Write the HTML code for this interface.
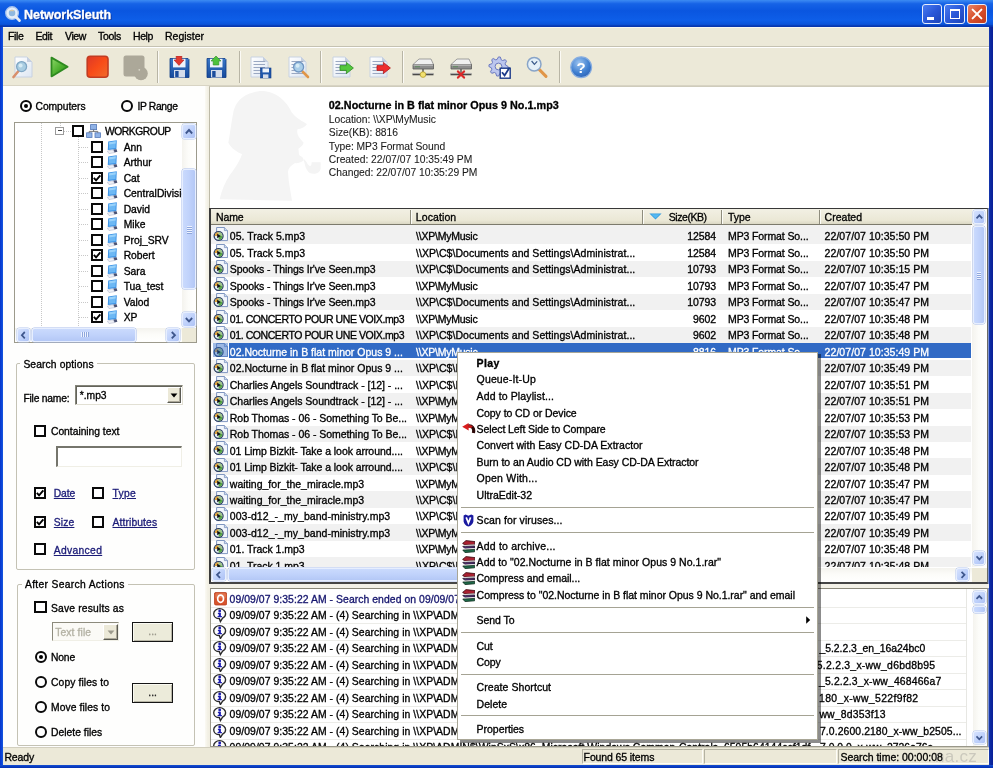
<!DOCTYPE html>
<html><head><meta charset="utf-8"><title>NetworkSleuth</title>
<style>
html,body{margin:0;padding:0;background:#0a3cc8;}
body{width:993px;height:768px;overflow:hidden;font-family:"Liberation Sans",sans-serif;}
#w{opacity:.999;filter:blur(.4px);position:relative;width:993px;height:768px;overflow:hidden;background:#ece9d8;}
#w div,#w span.t,#w svg{position:absolute;box-sizing:border-box;}
span.t{white-space:pre;line-height:1.117;-webkit-text-stroke:.32px currentColor;}

</style></head>
<body>
<div id="w">
<div style="left:0px;top:0px;width:993px;height:27px;background:linear-gradient(180deg,#3c8cf2 0%,#2d7aee 6%,#1663e6 14%,#0a56e0 40%,#0e5ee8 75%,#0b54da 90%,#0838b0 96%,#0836ac 100%);"></div>
<div style="left:0px;top:27px;width:3.2px;height:741px;background:linear-gradient(90deg,#0a34c8,#0a48dc 60%,#1a56dc);"></div>
<div style="left:988.3px;top:27px;width:4.7px;height:741px;background:linear-gradient(90deg,#dfe8fa 0,#1a3cb0 20%,#0c2aa2 45%,#0a1e96 100%);"></div>
<div style="left:0px;top:764.5px;width:993px;height:3.5px;background:linear-gradient(180deg,#1a52d0,#0a40c8 40%,#0530b0);"></div>
<svg style="left:4px;top:4.5px" width="18.5" height="18.5" viewBox="0 0 17 17"><circle cx="7.4" cy="7.4" r="5.8" fill="#e4eefa" stroke="#a8c4ee" stroke-width="1.2"/><circle cx="7.4" cy="7.4" r="3" fill="#8fb8e0"/><path d="M5.6 5.4 A3 3 0 0 1 9 5.6" stroke="#d8c8a8" stroke-width="1.2" fill="none"/><path d="M10.8 10.8 L14.2 14.2" stroke="#e6eaf2" stroke-width="2.6" stroke-linecap="round"/></svg>
<span class="t" style="top:7.83px;font-size:12.6px;left:24px;letter-spacing:-0.090px;color:#fff;font-weight:bold;text-shadow:1px 1px 0 #0a2c8c;">NetworkSleuth</span>
<div style="left:922.2px;top:4px;width:20.3px;height:20px;border:1px solid #e8eefc;border-radius:3px;background:linear-gradient(135deg,#4a7cf0,#2a58d8 50%,#1c44b8);"><div style="left:4px;top:12px;width:7px;height:2.6px;background:#fff"></div></div>
<div style="left:944.4px;top:4px;width:20.3px;height:20px;border:1px solid #e8eefc;border-radius:3px;background:linear-gradient(135deg,#4a7cf0,#2a58d8 50%,#1c44b8);"><div style="left:4.2px;top:4px;width:10.4px;height:10.4px;border:1.4px solid #fff;border-top-width:2.6px"></div></div>
<div style="left:966.8px;top:4px;width:20.3px;height:20px;border:1px solid #e8eefc;border-radius:3px;background:linear-gradient(135deg,#e8866a,#d8502c 50%,#c03a1c);"><svg style="left:0;top:0" width="18" height="18" viewBox="0 0 18 18"><path d="M4.6 4.6 L13.4 13.4 M13.4 4.6 L4.6 13.4" stroke="#fff" stroke-width="2" stroke-linecap="round"/></svg></div>
<div style="left:3px;top:27px;width:986px;height:19.5px;background:#ece9d8;border-top:1px solid #f8f7f0;"></div>
<span class="t" style="top:30.78px;font-size:10.5px;left:8px;letter-spacing:-0.380px;">File</span>
<span class="t" style="top:30.78px;font-size:10.5px;left:35.5px;letter-spacing:-0.398px;">Edit</span>
<span class="t" style="top:30.78px;font-size:10.5px;left:65px;letter-spacing:-0.395px;">View</span>
<span class="t" style="top:30.78px;font-size:10.5px;left:98px;letter-spacing:-0.303px;">Tools</span>
<span class="t" style="top:30.78px;font-size:10.5px;left:133px;letter-spacing:-0.402px;">Help</span>
<span class="t" style="top:30.78px;font-size:10.5px;left:165px;letter-spacing:-0.014px;">Register</span>
<div style="left:3px;top:46px;width:986px;height:1px;background:#c5c2b2;"></div>
<div style="left:3px;top:47px;width:986px;height:1px;background:#fff;"></div>
<div style="left:3px;top:48px;width:986px;height:38px;background:#ece9d8;"></div>
<div style="left:3px;top:85px;width:986px;height:1px;background:#d8d4c4;"></div>
<div style="left:156.5px;top:51px;width:1px;height:32px;background:#b8b5a5;"></div>
<div style="left:157.5px;top:51px;width:1px;height:32px;background:#fbfaf5;"></div>
<div style="left:238.5px;top:51px;width:1px;height:32px;background:#b8b5a5;"></div>
<div style="left:239.5px;top:51px;width:1px;height:32px;background:#fbfaf5;"></div>
<div style="left:320px;top:51px;width:1px;height:32px;background:#b8b5a5;"></div>
<div style="left:321px;top:51px;width:1px;height:32px;background:#fbfaf5;"></div>
<div style="left:401.5px;top:51px;width:1px;height:32px;background:#b8b5a5;"></div>
<div style="left:402.5px;top:51px;width:1px;height:32px;background:#fbfaf5;"></div>
<div style="left:559px;top:51px;width:1px;height:32px;background:#b8b5a5;"></div>
<div style="left:560px;top:51px;width:1px;height:32px;background:#fbfaf5;"></div>
<svg width="0" height="0" style="left:0;top:0"><defs><linearGradient id="gPlay" x1="0" y1="0" x2="1" y2="1"><stop offset="0" stop-color="#8fd86a"/><stop offset=".55" stop-color="#4aae2c"/><stop offset="1" stop-color="#2f8a1c"/></linearGradient><linearGradient id="gStop" x1="0" y1="0" x2="1" y2="1"><stop offset="0" stop-color="#dc3828"/><stop offset=".5" stop-color="#f84c18"/><stop offset="1" stop-color="#f06c2c"/></linearGradient><linearGradient id="gFlop" x1="0" y1="0" x2="0" y2="1"><stop offset="0" stop-color="#3a78c8"/><stop offset="1" stop-color="#164a9c"/></linearGradient><linearGradient id="gPage" x1="0" y1="0" x2="1" y2="1"><stop offset="0" stop-color="#ffffff"/><stop offset="1" stop-color="#dde6f2"/></linearGradient><radialGradient id="gHelp" cx=".4" cy=".3" r=".8"><stop offset="0" stop-color="#9cc4f0"/><stop offset=".6" stop-color="#3f7fd0"/><stop offset="1" stop-color="#2a5cb0"/></radialGradient><linearGradient id="gDrv" x1="0" y1="0" x2="0" y2="1"><stop offset="0" stop-color="#f4f4f4"/><stop offset="1" stop-color="#a8a8a8"/></linearGradient></defs></svg>
<svg style="left:11.5px;top:55.5px" width="21" height="23" viewBox="0 0 21 23"><g transform="translate(2,0)"><path d="M1 1 H13 L18 6 V21 H1 Z" fill="url(#gPage)" stroke="#c8d2e2" stroke-width="1"/><path d="M13 1 V6 H18 Z" fill="#c5cfdf"/></g><path d="M6.5 15 L1.5 21" stroke="#d8906c" stroke-width="2.6" stroke-linecap="round"/><circle cx="9.6" cy="10.6" r="5" fill="#a9cde2" stroke="#7fa6c4" stroke-width="1.3"/><circle cx="8.6" cy="9.4" r="2" fill="#d6ebf5"/></svg>
<svg style="left:49px;top:55px" width="21" height="24" viewBox="0 0 21 24"><path d="M2.5 2.6 L18.6 11.8 L2.5 21.4 Z" fill="url(#gPlay)" stroke="#2e8a20" stroke-width="1.8" stroke-linejoin="round"/></svg>
<svg style="left:85.5px;top:55px" width="23.5" height="24" viewBox="0 0 23.5 24"><rect x="1.2" y="1.2" width="20.8" height="21" rx="3" fill="url(#gStop)" stroke="#c23c22" stroke-width="1.6"/></svg>
<svg style="left:122.5px;top:54.5px" width="26" height="26" viewBox="0 0 26 26"><rect x="0.5" y="0.5" width="21" height="21" rx="2.5" fill="#aca899"/><circle cx="18" cy="18.5" r="6.8" fill="#aca899"/><circle cx="16.3" cy="14.8" r="0.9" fill="#d8d5c8"/></svg>
<svg style="left:168.5px;top:55.5px" width="21" height="23" viewBox="0 0 21 23"><path d="M1 2.5 H19 L20 3.5 V21.5 H1 Z" fill="url(#gFlop)" stroke="#0e3a86" stroke-width=".8"/><rect x="4" y="2.8" width="12.5" height="8.6" fill="#eef3fa"/><rect x="5" y="14" width="11" height="7.5" fill="#d4dcea"/><rect x="6.2" y="15" width="3.4" height="6" fill="#1b4c9c"/><path d="M7.2 0 H12.8 V4 H15 L10 9.4 L5 4 H7.2 Z" fill="#e03a30" stroke="#b02020" stroke-width=".6"/></svg>
<svg style="left:205.8px;top:55.5px" width="21" height="23" viewBox="0 0 21 23"><path d="M1 2.5 H19 L20 3.5 V21.5 H1 Z" fill="url(#gFlop)" stroke="#0e3a86" stroke-width=".8"/><rect x="4" y="2.8" width="12.5" height="8.6" fill="#eef3fa"/><rect x="5" y="14" width="11" height="7.5" fill="#d4dcea"/><rect x="6.2" y="15" width="3.4" height="6" fill="#1b4c9c"/><path d="M10 0 L15 5 H12.8 V9 H7.2 V5 H5 Z" fill="#4ec23c" stroke="#2e8a22" stroke-width=".6"/></svg>
<svg style="left:250px;top:55.5px" width="23" height="23" viewBox="0 0 23 23"><path d="M1 1 H13 L18 6 V21 H1 Z" fill="url(#gPage)" stroke="#c8d2e2" stroke-width="1"/><path d="M13 1 V6 H18 Z" fill="#c5cfdf"/><path d="M3.5 5.5 H15" stroke="#9aa8c2" stroke-width="1"/><path d="M3.5 8.5 H15" stroke="#9aa8c2" stroke-width="1"/><path d="M3.5 11.5 H15" stroke="#9aa8c2" stroke-width="1"/><path d="M3.5 14.5 H15" stroke="#9aa8c2" stroke-width="1"/><path d="M3.5 17.5 H15" stroke="#9aa8c2" stroke-width="1"/><rect x="10.5" y="12" width="10.5" height="10" fill="#1f56aa" stroke="#0e3a86" stroke-width=".6"/><rect x="12.5" y="12.4" width="6.5" height="4" fill="#eef3fa"/><rect x="13" y="18.4" width="5.4" height="3.6" fill="#d4dcea"/></svg>
<svg style="left:288px;top:55.5px" width="23" height="23" viewBox="0 0 23 23"><path d="M1 1 H13 L18 6 V21 H1 Z" fill="url(#gPage)" stroke="#c8d2e2" stroke-width="1"/><path d="M13 1 V6 H18 Z" fill="#c5cfdf"/><path d="M3.5 5.5 H15" stroke="#9aa8c2" stroke-width="1"/><path d="M3.5 8.5 H15" stroke="#9aa8c2" stroke-width="1"/><path d="M3.5 11.5 H15" stroke="#9aa8c2" stroke-width="1"/><path d="M3.5 14.5 H15" stroke="#9aa8c2" stroke-width="1"/><path d="M3.5 17.5 H15" stroke="#9aa8c2" stroke-width="1"/><path d="M14.5 15.5 L20 21" stroke="#e09648" stroke-width="2.6" stroke-linecap="round"/><circle cx="10.6" cy="11" r="5" fill="#a9cde8" stroke="#7096c2" stroke-width="1.3"/><circle cx="9.6" cy="9.8" r="2" fill="#d6ebf5"/></svg>
<svg style="left:332px;top:55.5px" width="23" height="23" viewBox="0 0 23 23"><path d="M1 1 H13 L18 6 V21 H1 Z" fill="url(#gPage)" stroke="#c8d2e2" stroke-width="1"/><path d="M13 1 V6 H18 Z" fill="#c5cfdf"/><path d="M3.5 5.5 H15" stroke="#9aa8c2" stroke-width="1"/><path d="M3.5 8.5 H15" stroke="#9aa8c2" stroke-width="1"/><path d="M3.5 11.5 H15" stroke="#9aa8c2" stroke-width="1"/><path d="M3.5 14.5 H15" stroke="#9aa8c2" stroke-width="1"/><path d="M3.5 17.5 H15" stroke="#9aa8c2" stroke-width="1"/><path d="M8 9.6 H14.4 V6.4 L21.4 12 L14.4 17.6 V14.4 H8 Z" fill="#54c83e" stroke="#2f8a22" stroke-width=".8"/></svg>
<svg style="left:369px;top:55.5px" width="23" height="23" viewBox="0 0 23 23"><path d="M1 1 H13 L18 6 V21 H1 Z" fill="url(#gPage)" stroke="#c8d2e2" stroke-width="1"/><path d="M13 1 V6 H18 Z" fill="#c5cfdf"/><path d="M3.5 5.5 H15" stroke="#9aa8c2" stroke-width="1"/><path d="M3.5 8.5 H15" stroke="#9aa8c2" stroke-width="1"/><path d="M3.5 11.5 H15" stroke="#9aa8c2" stroke-width="1"/><path d="M3.5 14.5 H15" stroke="#9aa8c2" stroke-width="1"/><path d="M3.5 17.5 H15" stroke="#9aa8c2" stroke-width="1"/><path d="M8 9.6 H14.4 V6.4 L21.4 12 L14.4 17.6 V14.4 H8 Z" fill="#ee2e2e" stroke="#b01818" stroke-width=".8"/></svg>
<svg style="left:411px;top:56px" width="24" height="23" viewBox="0 0 24 23"><path d="M2 8.5 L8 3 H20 L22.5 8.5 Z" fill="#f0f0f0" stroke="#8a8a8a" stroke-width=".8"/><path d="M2 8.5 H22.5 V13 H2 Z" fill="#8c8c8c" stroke="#5a5a5a" stroke-width=".8"/><path d="M2.4 9 H22" stroke="#e8e8e8" stroke-width=".8"/><rect x="4" y="10" width="5" height="1.4" fill="#6a8a6a"/><path d="M12 13 V17" stroke="#555" stroke-width="1.4"/><path d="M1.5 18.3 H22.5" stroke="#4a4a4a" stroke-width="2"/><path d="M1.5 17.3 H22.5" stroke="#c8c8c8" stroke-width=".8"/><circle cx="12" cy="18.6" r="2.8" fill="#f2e070" stroke="#b09820" stroke-width=".7"/></svg>
<svg style="left:448.5px;top:56px" width="24" height="23" viewBox="0 0 24 23"><path d="M2 8.5 L8 3 H20 L22.5 8.5 Z" fill="#f0f0f0" stroke="#8a8a8a" stroke-width=".8"/><path d="M2 8.5 H22.5 V13 H2 Z" fill="#8c8c8c" stroke="#5a5a5a" stroke-width=".8"/><path d="M2.4 9 H22" stroke="#e8e8e8" stroke-width=".8"/><rect x="4" y="10" width="5" height="1.4" fill="#6a8a6a"/><path d="M12 13 V17" stroke="#555" stroke-width="1.4"/><path d="M1.5 18.3 H22.5" stroke="#4a4a4a" stroke-width="2"/><path d="M1.5 17.3 H22.5" stroke="#c8c8c8" stroke-width=".8"/><path d="M9 15.4 L15 21.6 M15 15.4 L9 21.6" stroke="#dc2828" stroke-width="2.2" stroke-linecap="round"/></svg>
<svg style="left:487.5px;top:55.5px" width="25" height="24" viewBox="0 0 25 24"><path d="M20.10 10.50 L19.92 12.37 L17.15 13.26 L16.49 14.50 L17.29 17.29 L15.83 18.48 L13.26 17.15 L11.90 17.56 L10.50 20.10 L8.63 19.92 L7.74 17.15 L6.50 16.49 L3.71 17.29 L2.52 15.83 L3.85 13.26 L3.44 11.90 L0.90 10.50 L1.08 8.63 L3.85 7.74 L4.51 6.50 L3.71 3.71 L5.17 2.52 L7.74 3.85 L9.10 3.44 L10.50 0.90 L12.37 1.08 L13.26 3.85 L14.50 4.51 L17.29 3.71 L18.48 5.17 L17.15 7.74 L17.56 9.10 Z" fill="#bcc6ee" stroke="#6a78c0" stroke-width="1"/><circle cx="10.5" cy="10.5" r="3.4" fill="#ece9d8" stroke="#6a78c0" stroke-width="1"/><rect x="12.2" y="12.2" width="10" height="10" fill="#fff" stroke="#1c3a8a" stroke-width="1.4"/><path d="M14 16.2 L16.6 19.4 L21.6 11.6" fill="none" stroke="#1c3a8a" stroke-width="1.8"/></svg>
<svg style="left:526px;top:55.5px" width="23" height="23" viewBox="0 0 23 23"><path d="M12.4 12.6 L20 20.4" stroke="#e09648" stroke-width="3" stroke-linecap="round"/><circle cx="8.2" cy="8.2" r="6.8" fill="#e4f0f8" stroke="#88a4c8" stroke-width="1.5"/><path d="M5.6 5 L8.4 8.4 L11.2 5.4" fill="none" stroke="#3a5a8a" stroke-width="1.2"/></svg>
<svg style="left:569.5px;top:55.5px" width="23" height="23" viewBox="0 0 23 23"><circle cx="11.2" cy="11.2" r="10.4" fill="url(#gHelp)" stroke="#88aee0" stroke-width="1.2"/><text x="11.2" y="16.6" font-family="Liberation Sans" font-weight="bold" font-size="15" text-anchor="middle" fill="#fff">?</text></svg>
<div style="left:3px;top:86px;width:202px;height:661px;background:#fefefd;"></div>
<div style="left:205px;top:86px;width:4.5px;height:661px;background:linear-gradient(90deg,#fbfaf4,#f3f1e6 50%,#f0ede0);"></div>
<div style="left:19.8px;top:100px;width:11.8px;height:11.8px;border:2px solid #0a0a0a;border-radius:50%;background:#fff;"><div style="left:1.9px;top:1.9px;width:4px;height:4px;border-radius:50%;background:#000"></div></div>
<span class="t" style="top:100.89px;font-size:10.3px;left:35.5px;letter-spacing:-0.040px;">Computers</span>
<div style="left:121.3px;top:100px;width:11.8px;height:11.8px;border:2px solid #0a0a0a;border-radius:50%;background:#fff;"></div>
<span class="t" style="top:100.89px;font-size:10.3px;left:137.4px;letter-spacing:-0.319px;">IP Range</span>
<div style="left:13.7px;top:122px;width:183.3px;height:221px;border:1px solid #9c9a8c;background:#fff;"></div>
<div style="left:41px;top:123px;width:1px;height:204px;background-image:linear-gradient(#c8c8c8 50%,transparent 50%);background-size:1px 2px;"></div>
<div style="left:59.5px;top:123px;width:1px;height:4px;background-image:linear-gradient(#c8c8c8 50%,transparent 50%);background-size:1px 2px;"></div>
<div style="left:64px;top:130.5px;width:8px;height:1px;background-image:linear-gradient(90deg,#c8c8c8 50%,transparent 50%);background-size:2px 1px;"></div>
<div style="left:78px;top:137px;width:1px;height:190px;background-image:linear-gradient(#c8c8c8 50%,transparent 50%);background-size:1px 2px;"></div>
<div style="left:55.4px;top:126.6px;width:8.6px;height:8.6px;border:1px solid #9a9a9a;background:#fff;"><div style="left:1.3px;top:2.8px;width:4px;height:1px;background:#444"></div></div>
<div style="left:72.3px;top:124.5px;width:12.2px;height:12.2px;border:2px solid #0a0a0a;background:#fff;"></div>
<svg style="left:85.5px;top:123.5px" width="15" height="15" viewBox="0 0 15 15"><rect x="4.6" y="0.6" width="6" height="5" fill="#8fb2e6" stroke="#5478b8" stroke-width=".8"/><rect x="0.6" y="8.8" width="5.4" height="4.6" fill="#8fb2e6" stroke="#5478b8" stroke-width=".8"/><rect x="9" y="8.8" width="5.4" height="4.6" fill="#8fb2e6" stroke="#5478b8" stroke-width=".8"/><path d="M7.6 5.6 V7.6 M3.2 8.8 V7.4 H11.8 V8.8" fill="none" stroke="#6a6a6a" stroke-width=".9"/></svg>
<span class="t" style="top:125.99px;font-size:10.3px;left:105px;letter-spacing:-0.444px;">WORKGROUP</span>
<div style="left:79px;top:146.6px;width:10px;height:1px;background-image:linear-gradient(90deg,#c8c8c8 50%,transparent 50%);background-size:2px 1px;"></div>
<div style="left:90.6px;top:140.5px;width:12.2px;height:12.2px;border:2px solid #0a0a0a;background:#fff;"></div>
<svg style="left:106.2px;top:139.6px" width="13" height="14" viewBox="0 0 13 14"><path d="M2.2 1.4 L10.8 0.2 L10.4 9.2 L1.8 10 Z" fill="#3f94e6"/><path d="M3.2 2.2 L9.8 1.2 L9.5 8 L2.9 8.8 Z" fill="#6db8f4"/><path d="M3.2 2.2 L9.8 1.2 L9.7 3.4 L3.1 4.6 Z" fill="#9ad2fa"/><path d="M1.4 11.2 L6 9.8 L8 10.8 L8.4 12.6 L3 13.6 Z" fill="#eef0f6" stroke="#a8aec8" stroke-width=".5"/><path d="M7.4 9.6 L10.6 9.2 L11.4 11.8 L8.6 12.6 Z" fill="#4a5274"/></svg>
<span class="t" style="top:141.89px;font-size:10.3px;left:123.7px;">Ann</span>
<div style="left:79px;top:162.1px;width:10px;height:1px;background-image:linear-gradient(90deg,#c8c8c8 50%,transparent 50%);background-size:2px 1px;"></div>
<div style="left:90.6px;top:156px;width:12.2px;height:12.2px;border:2px solid #0a0a0a;background:#fff;"></div>
<svg style="left:106.2px;top:155.1px" width="13" height="14" viewBox="0 0 13 14"><path d="M2.2 1.4 L10.8 0.2 L10.4 9.2 L1.8 10 Z" fill="#3f94e6"/><path d="M3.2 2.2 L9.8 1.2 L9.5 8 L2.9 8.8 Z" fill="#6db8f4"/><path d="M3.2 2.2 L9.8 1.2 L9.7 3.4 L3.1 4.6 Z" fill="#9ad2fa"/><path d="M1.4 11.2 L6 9.8 L8 10.8 L8.4 12.6 L3 13.6 Z" fill="#eef0f6" stroke="#a8aec8" stroke-width=".5"/><path d="M7.4 9.6 L10.6 9.2 L11.4 11.8 L8.6 12.6 Z" fill="#4a5274"/></svg>
<span class="t" style="top:157.39px;font-size:10.3px;left:123.7px;">Arthur</span>
<div style="left:79px;top:177.6px;width:10px;height:1px;background-image:linear-gradient(90deg,#c8c8c8 50%,transparent 50%);background-size:2px 1px;"></div>
<div style="left:90.6px;top:171.5px;width:12.2px;height:12.2px;border:2px solid #0a0a0a;background:#fff;"><svg style="left:-2px;top:-2px" width="12.2" height="12.2" viewBox="0 0 12 12"><path d="M2.8 5.8 L5 8.2 L9.2 3.4" fill="none" stroke="#000" stroke-width="1.9"/></svg></div>
<svg style="left:106.2px;top:170.6px" width="13" height="14" viewBox="0 0 13 14"><path d="M2.2 1.4 L10.8 0.2 L10.4 9.2 L1.8 10 Z" fill="#3f94e6"/><path d="M3.2 2.2 L9.8 1.2 L9.5 8 L2.9 8.8 Z" fill="#6db8f4"/><path d="M3.2 2.2 L9.8 1.2 L9.7 3.4 L3.1 4.6 Z" fill="#9ad2fa"/><path d="M1.4 11.2 L6 9.8 L8 10.8 L8.4 12.6 L3 13.6 Z" fill="#eef0f6" stroke="#a8aec8" stroke-width=".5"/><path d="M7.4 9.6 L10.6 9.2 L11.4 11.8 L8.6 12.6 Z" fill="#4a5274"/></svg>
<span class="t" style="top:172.89px;font-size:10.3px;left:123.7px;">Cat</span>
<div style="left:79px;top:193.1px;width:10px;height:1px;background-image:linear-gradient(90deg,#c8c8c8 50%,transparent 50%);background-size:2px 1px;"></div>
<div style="left:90.6px;top:187px;width:12.2px;height:12.2px;border:2px solid #0a0a0a;background:#fff;"></div>
<svg style="left:106.2px;top:186.1px" width="13" height="14" viewBox="0 0 13 14"><path d="M2.2 1.4 L10.8 0.2 L10.4 9.2 L1.8 10 Z" fill="#3f94e6"/><path d="M3.2 2.2 L9.8 1.2 L9.5 8 L2.9 8.8 Z" fill="#6db8f4"/><path d="M3.2 2.2 L9.8 1.2 L9.7 3.4 L3.1 4.6 Z" fill="#9ad2fa"/><path d="M1.4 11.2 L6 9.8 L8 10.8 L8.4 12.6 L3 13.6 Z" fill="#eef0f6" stroke="#a8aec8" stroke-width=".5"/><path d="M7.4 9.6 L10.6 9.2 L11.4 11.8 L8.6 12.6 Z" fill="#4a5274"/></svg>
<div style="left:123.7px;top:186.1px;width:58px;height:14px;overflow:hidden;"><span class="t" style="left:0;top:1.6px;font-size:10.3px">CentralDivisio</span></div>
<div style="left:79px;top:208.6px;width:10px;height:1px;background-image:linear-gradient(90deg,#c8c8c8 50%,transparent 50%);background-size:2px 1px;"></div>
<div style="left:90.6px;top:202.5px;width:12.2px;height:12.2px;border:2px solid #0a0a0a;background:#fff;"></div>
<svg style="left:106.2px;top:201.6px" width="13" height="14" viewBox="0 0 13 14"><path d="M2.2 1.4 L10.8 0.2 L10.4 9.2 L1.8 10 Z" fill="#3f94e6"/><path d="M3.2 2.2 L9.8 1.2 L9.5 8 L2.9 8.8 Z" fill="#6db8f4"/><path d="M3.2 2.2 L9.8 1.2 L9.7 3.4 L3.1 4.6 Z" fill="#9ad2fa"/><path d="M1.4 11.2 L6 9.8 L8 10.8 L8.4 12.6 L3 13.6 Z" fill="#eef0f6" stroke="#a8aec8" stroke-width=".5"/><path d="M7.4 9.6 L10.6 9.2 L11.4 11.8 L8.6 12.6 Z" fill="#4a5274"/></svg>
<span class="t" style="top:203.89px;font-size:10.3px;left:123.7px;">David</span>
<div style="left:79px;top:224.1px;width:10px;height:1px;background-image:linear-gradient(90deg,#c8c8c8 50%,transparent 50%);background-size:2px 1px;"></div>
<div style="left:90.6px;top:218px;width:12.2px;height:12.2px;border:2px solid #0a0a0a;background:#fff;"></div>
<svg style="left:106.2px;top:217.1px" width="13" height="14" viewBox="0 0 13 14"><path d="M2.2 1.4 L10.8 0.2 L10.4 9.2 L1.8 10 Z" fill="#3f94e6"/><path d="M3.2 2.2 L9.8 1.2 L9.5 8 L2.9 8.8 Z" fill="#6db8f4"/><path d="M3.2 2.2 L9.8 1.2 L9.7 3.4 L3.1 4.6 Z" fill="#9ad2fa"/><path d="M1.4 11.2 L6 9.8 L8 10.8 L8.4 12.6 L3 13.6 Z" fill="#eef0f6" stroke="#a8aec8" stroke-width=".5"/><path d="M7.4 9.6 L10.6 9.2 L11.4 11.8 L8.6 12.6 Z" fill="#4a5274"/></svg>
<span class="t" style="top:219.39px;font-size:10.3px;left:123.7px;">Mike</span>
<div style="left:79px;top:239.6px;width:10px;height:1px;background-image:linear-gradient(90deg,#c8c8c8 50%,transparent 50%);background-size:2px 1px;"></div>
<div style="left:90.6px;top:233.5px;width:12.2px;height:12.2px;border:2px solid #0a0a0a;background:#fff;"></div>
<svg style="left:106.2px;top:232.6px" width="13" height="14" viewBox="0 0 13 14"><path d="M2.2 1.4 L10.8 0.2 L10.4 9.2 L1.8 10 Z" fill="#3f94e6"/><path d="M3.2 2.2 L9.8 1.2 L9.5 8 L2.9 8.8 Z" fill="#6db8f4"/><path d="M3.2 2.2 L9.8 1.2 L9.7 3.4 L3.1 4.6 Z" fill="#9ad2fa"/><path d="M1.4 11.2 L6 9.8 L8 10.8 L8.4 12.6 L3 13.6 Z" fill="#eef0f6" stroke="#a8aec8" stroke-width=".5"/><path d="M7.4 9.6 L10.6 9.2 L11.4 11.8 L8.6 12.6 Z" fill="#4a5274"/></svg>
<span class="t" style="top:234.89px;font-size:10.3px;left:123.7px;">Proj_SRV</span>
<div style="left:79px;top:255.1px;width:10px;height:1px;background-image:linear-gradient(90deg,#c8c8c8 50%,transparent 50%);background-size:2px 1px;"></div>
<div style="left:90.6px;top:249px;width:12.2px;height:12.2px;border:2px solid #0a0a0a;background:#fff;"><svg style="left:-2px;top:-2px" width="12.2" height="12.2" viewBox="0 0 12 12"><path d="M2.8 5.8 L5 8.2 L9.2 3.4" fill="none" stroke="#000" stroke-width="1.9"/></svg></div>
<svg style="left:106.2px;top:248.1px" width="13" height="14" viewBox="0 0 13 14"><path d="M2.2 1.4 L10.8 0.2 L10.4 9.2 L1.8 10 Z" fill="#3f94e6"/><path d="M3.2 2.2 L9.8 1.2 L9.5 8 L2.9 8.8 Z" fill="#6db8f4"/><path d="M3.2 2.2 L9.8 1.2 L9.7 3.4 L3.1 4.6 Z" fill="#9ad2fa"/><path d="M1.4 11.2 L6 9.8 L8 10.8 L8.4 12.6 L3 13.6 Z" fill="#eef0f6" stroke="#a8aec8" stroke-width=".5"/><path d="M7.4 9.6 L10.6 9.2 L11.4 11.8 L8.6 12.6 Z" fill="#4a5274"/></svg>
<span class="t" style="top:250.39px;font-size:10.3px;left:123.7px;">Robert</span>
<div style="left:79px;top:270.6px;width:10px;height:1px;background-image:linear-gradient(90deg,#c8c8c8 50%,transparent 50%);background-size:2px 1px;"></div>
<div style="left:90.6px;top:264.5px;width:12.2px;height:12.2px;border:2px solid #0a0a0a;background:#fff;"></div>
<svg style="left:106.2px;top:263.6px" width="13" height="14" viewBox="0 0 13 14"><path d="M2.2 1.4 L10.8 0.2 L10.4 9.2 L1.8 10 Z" fill="#3f94e6"/><path d="M3.2 2.2 L9.8 1.2 L9.5 8 L2.9 8.8 Z" fill="#6db8f4"/><path d="M3.2 2.2 L9.8 1.2 L9.7 3.4 L3.1 4.6 Z" fill="#9ad2fa"/><path d="M1.4 11.2 L6 9.8 L8 10.8 L8.4 12.6 L3 13.6 Z" fill="#eef0f6" stroke="#a8aec8" stroke-width=".5"/><path d="M7.4 9.6 L10.6 9.2 L11.4 11.8 L8.6 12.6 Z" fill="#4a5274"/></svg>
<span class="t" style="top:265.89px;font-size:10.3px;left:123.7px;">Sara</span>
<div style="left:79px;top:286.1px;width:10px;height:1px;background-image:linear-gradient(90deg,#c8c8c8 50%,transparent 50%);background-size:2px 1px;"></div>
<div style="left:90.6px;top:280px;width:12.2px;height:12.2px;border:2px solid #0a0a0a;background:#fff;"></div>
<svg style="left:106.2px;top:279.1px" width="13" height="14" viewBox="0 0 13 14"><path d="M2.2 1.4 L10.8 0.2 L10.4 9.2 L1.8 10 Z" fill="#3f94e6"/><path d="M3.2 2.2 L9.8 1.2 L9.5 8 L2.9 8.8 Z" fill="#6db8f4"/><path d="M3.2 2.2 L9.8 1.2 L9.7 3.4 L3.1 4.6 Z" fill="#9ad2fa"/><path d="M1.4 11.2 L6 9.8 L8 10.8 L8.4 12.6 L3 13.6 Z" fill="#eef0f6" stroke="#a8aec8" stroke-width=".5"/><path d="M7.4 9.6 L10.6 9.2 L11.4 11.8 L8.6 12.6 Z" fill="#4a5274"/></svg>
<span class="t" style="top:281.39px;font-size:10.3px;left:123.7px;">Tua_test</span>
<div style="left:79px;top:301.6px;width:10px;height:1px;background-image:linear-gradient(90deg,#c8c8c8 50%,transparent 50%);background-size:2px 1px;"></div>
<div style="left:90.6px;top:295.5px;width:12.2px;height:12.2px;border:2px solid #0a0a0a;background:#fff;"></div>
<svg style="left:106.2px;top:294.6px" width="13" height="14" viewBox="0 0 13 14"><path d="M2.2 1.4 L10.8 0.2 L10.4 9.2 L1.8 10 Z" fill="#3f94e6"/><path d="M3.2 2.2 L9.8 1.2 L9.5 8 L2.9 8.8 Z" fill="#6db8f4"/><path d="M3.2 2.2 L9.8 1.2 L9.7 3.4 L3.1 4.6 Z" fill="#9ad2fa"/><path d="M1.4 11.2 L6 9.8 L8 10.8 L8.4 12.6 L3 13.6 Z" fill="#eef0f6" stroke="#a8aec8" stroke-width=".5"/><path d="M7.4 9.6 L10.6 9.2 L11.4 11.8 L8.6 12.6 Z" fill="#4a5274"/></svg>
<span class="t" style="top:296.89px;font-size:10.3px;left:123.7px;">Valod</span>
<div style="left:79px;top:317.1px;width:10px;height:1px;background-image:linear-gradient(90deg,#c8c8c8 50%,transparent 50%);background-size:2px 1px;"></div>
<div style="left:90.6px;top:311px;width:12.2px;height:12.2px;border:2px solid #0a0a0a;background:#fff;"><svg style="left:-2px;top:-2px" width="12.2" height="12.2" viewBox="0 0 12 12"><path d="M2.8 5.8 L5 8.2 L9.2 3.4" fill="none" stroke="#000" stroke-width="1.9"/></svg></div>
<svg style="left:106.2px;top:310.1px" width="13" height="14" viewBox="0 0 13 14"><path d="M2.2 1.4 L10.8 0.2 L10.4 9.2 L1.8 10 Z" fill="#3f94e6"/><path d="M3.2 2.2 L9.8 1.2 L9.5 8 L2.9 8.8 Z" fill="#6db8f4"/><path d="M3.2 2.2 L9.8 1.2 L9.7 3.4 L3.1 4.6 Z" fill="#9ad2fa"/><path d="M1.4 11.2 L6 9.8 L8 10.8 L8.4 12.6 L3 13.6 Z" fill="#eef0f6" stroke="#a8aec8" stroke-width=".5"/><path d="M7.4 9.6 L10.6 9.2 L11.4 11.8 L8.6 12.6 Z" fill="#4a5274"/></svg>
<span class="t" style="top:312.39px;font-size:10.3px;left:123.7px;">XP</span>
<div style="left:182px;top:123px;width:14px;height:204px;background:linear-gradient(90deg,#f4f3ee,#fcfcf9 45%,#fffffe);"></div>
<div style="left:182px;top:123.6px;width:14px;height:15.4px;background:linear-gradient(135deg,#d6e2fe,#bccffa 60%,#aec2f4);border:1px solid #e6eeff;border-radius:2.5px;box-shadow:0 0 0 .5px #b4c6ee;"><svg style="left:0;top:0" width="12" height="13.4" viewBox="0 0 13.6 13.6" preserveAspectRatio="none"><path d="M3.2 8.6 L6.8 5 L10.4 8.6" fill="none" stroke="#3e568c" stroke-width="2.1"/></svg></div>
<div style="left:182px;top:168.5px;width:14px;height:120px;background:linear-gradient(90deg,#cadafd,#c0d2fb 50%,#b4c8f6);border:1px solid #e6eeff;border-radius:2.5px;box-shadow:0 0 0 .5px #a8bcec;"><div style="left:3.5px;top:56px;width:5px;height:1px;background:#eef3ff;box-shadow:0 1px 0 #8ea6dc"></div><div style="left:3.5px;top:58px;width:5px;height:1px;background:#eef3ff;box-shadow:0 1px 0 #8ea6dc"></div><div style="left:3.5px;top:60px;width:5px;height:1px;background:#eef3ff;box-shadow:0 1px 0 #8ea6dc"></div><div style="left:3.5px;top:62px;width:5px;height:1px;background:#eef3ff;box-shadow:0 1px 0 #8ea6dc"></div></div>
<div style="left:182px;top:311.5px;width:14px;height:15px;background:linear-gradient(135deg,#d6e2fe,#bccffa 60%,#aec2f4);border:1px solid #e6eeff;border-radius:2.5px;box-shadow:0 0 0 .5px #b4c6ee;"><svg style="left:0;top:0" width="12" height="13" viewBox="0 0 13.6 13.6" preserveAspectRatio="none"><path d="M3.2 5.2 L6.8 8.8 L10.4 5.2" fill="none" stroke="#3e568c" stroke-width="2.1"/></svg></div>
<div style="left:14.7px;top:327.5px;width:167.3px;height:14.5px;background:linear-gradient(180deg,#f4f3ee,#fcfcf9 45%,#fffffe);"></div>
<div style="left:16.5px;top:327.8px;width:13px;height:14px;background:linear-gradient(135deg,#d6e2fe,#bccffa 60%,#aec2f4);border:1px solid #e6eeff;border-radius:2.5px;box-shadow:0 0 0 .5px #b4c6ee;"><svg style="left:0;top:0" width="11" height="12" viewBox="0 0 13.6 13.6" preserveAspectRatio="none"><path d="M8.4 3.4 L4.8 7 L8.4 10.6" fill="none" stroke="#3e568c" stroke-width="2.1"/></svg></div>
<div style="left:32px;top:327.8px;width:104px;height:14px;background:linear-gradient(180deg,#cadafd,#c0d2fb 50%,#b4c8f6);border:1px solid #e6eeff;border-radius:2.5px;box-shadow:0 0 0 .5px #a8bcec;"><div style="top:3.5px;left:48px;height:5px;width:1px;background:#eef3ff;box-shadow:1px 0 0 #8ea6dc"></div><div style="top:3.5px;left:50px;height:5px;width:1px;background:#eef3ff;box-shadow:1px 0 0 #8ea6dc"></div><div style="top:3.5px;left:52px;height:5px;width:1px;background:#eef3ff;box-shadow:1px 0 0 #8ea6dc"></div><div style="top:3.5px;left:54px;height:5px;width:1px;background:#eef3ff;box-shadow:1px 0 0 #8ea6dc"></div></div>
<div style="left:166px;top:327.8px;width:14px;height:14px;background:linear-gradient(135deg,#d6e2fe,#bccffa 60%,#aec2f4);border:1px solid #e6eeff;border-radius:2.5px;box-shadow:0 0 0 .5px #b4c6ee;"><svg style="left:0;top:0" width="12" height="12" viewBox="0 0 13.6 13.6" preserveAspectRatio="none"><path d="M5.4 3.4 L9 7 L5.4 10.6" fill="none" stroke="#3e568c" stroke-width="2.1"/></svg></div>
<div style="left:182px;top:327.5px;width:14px;height:14.5px;background:#ece9d8;"></div>
<div style="left:15.6px;top:363.4px;width:179px;height:206.4px;border:1px solid #c4c2b4;border-radius:2px;"></div>
<div style="left:20.4px;top:357.4px;width:76.3px;height:12px;background:#fefefd;"></div>
<span class="t" style="top:358.79px;font-size:10.3px;left:23.4px;letter-spacing:0.114px;">Search options</span>
<span class="t" style="top:393.39px;font-size:10.3px;left:23.4px;letter-spacing:-0.208px;">File name:</span>
<div style="left:75px;top:384.7px;width:107.8px;height:20px;border:1px solid #85857a;border-right-color:#e2e0d4;border-bottom-color:#e2e0d4;background:#fff;box-shadow:inset 1px 1px 0 #63635a;"></div>
<span class="t" style="top:389.79px;font-size:10.3px;left:79.7px;">*.mp3</span>
<div style="left:166.8px;top:387px;width:14.4px;height:15.6px;background:#ece9d8;border:1px solid #fff;border-right-color:#5a5a52;border-bottom-color:#5a5a52;box-shadow:inset -1px -1px 0 #aca899;"><svg style="left:2.7px;top:4.6px" width="8" height="5" viewBox="0 0 8 5"><path d="M0.6 0.6 H7.4 L4 4.4 Z" fill="#000"/></svg></div>
<div style="left:33.8px;top:424.5px;width:12.2px;height:12.2px;border:2px solid #0a0a0a;background:#fff;"></div>
<span class="t" style="top:425.79px;font-size:10.3px;left:51px;letter-spacing:-0.020px;">Containing text</span>
<div style="left:56.3px;top:446.3px;width:125.7px;height:20.7px;border:1px solid #f0efe6;border-top:2px solid #75756c;border-left:2px solid #75756c;background:#fff;"></div>
<div style="left:33.8px;top:486.9px;width:12.2px;height:12.2px;border:2px solid #0a0a0a;background:#fff;"><svg style="left:-2px;top:-2px" width="12.2" height="12.2" viewBox="0 0 12 12"><path d="M2.8 5.8 L5 8.2 L9.2 3.4" fill="none" stroke="#000" stroke-width="1.9"/></svg></div>
<span class="t" style="top:488.29px;font-size:10.3px;left:53.8px;letter-spacing:-0.141px;color:#1c1c78;text-decoration:underline;text-underline-offset:1px;">Date</span>
<div style="left:92.2px;top:486.9px;width:12.2px;height:12.2px;border:2px solid #0a0a0a;background:#fff;"></div>
<span class="t" style="top:488.29px;font-size:10.3px;left:112.5px;letter-spacing:0.293px;color:#1c1c78;text-decoration:underline;text-underline-offset:1px;">Type</span>
<div style="left:33.8px;top:516.1px;width:12.2px;height:12.2px;border:2px solid #0a0a0a;background:#fff;"><svg style="left:-2px;top:-2px" width="12.2" height="12.2" viewBox="0 0 12 12"><path d="M2.8 5.8 L5 8.2 L9.2 3.4" fill="none" stroke="#000" stroke-width="1.9"/></svg></div>
<span class="t" style="top:517.49px;font-size:10.3px;left:53.8px;letter-spacing:0.142px;color:#1c1c78;text-decoration:underline;text-underline-offset:1px;">Size</span>
<div style="left:92.2px;top:516.1px;width:12.2px;height:12.2px;border:2px solid #0a0a0a;background:#fff;"></div>
<span class="t" style="top:517.49px;font-size:10.3px;left:112.5px;letter-spacing:0.120px;color:#1c1c78;text-decoration:underline;text-underline-offset:1px;">Attributes</span>
<div style="left:33.8px;top:543.3px;width:12.2px;height:12.2px;border:2px solid #0a0a0a;background:#fff;"></div>
<span class="t" style="top:544.69px;font-size:10.3px;left:53.8px;letter-spacing:0.323px;color:#1c1c78;text-decoration:underline;text-underline-offset:1px;">Advanced</span>
<div style="left:16.8px;top:583.8px;width:177.8px;height:161.8px;border:1px solid #c4c2b4;border-radius:2px;"></div>
<div style="left:22px;top:577.8px;width:105.7px;height:12px;background:#fefefd;"></div>
<span class="t" style="top:579.19px;font-size:10.3px;left:25px;letter-spacing:0.320px;">After Search Actions</span>
<div style="left:34.4px;top:601.3px;width:12.2px;height:12.2px;border:2px solid #0a0a0a;background:#fff;"></div>
<span class="t" style="top:602.59px;font-size:10.3px;left:51px;letter-spacing:0.173px;">Save results as</span>
<div style="left:51.5px;top:622.3px;width:67.7px;height:19px;border:1px solid #f0efe6;border-top:1.5px solid #8c8a7c;border-left:1.5px solid #8c8a7c;background:#fbfaf6;"></div>
<span class="t" style="top:627.29px;font-size:10.3px;left:55.2px;letter-spacing:0.120px;color:#b4b2a4;">Text file</span>
<div style="left:102.6px;top:624.3px;width:15.2px;height:15.4px;background:#ece9d8;border:1px solid #fff;border-right-color:#5a5a52;border-bottom-color:#5a5a52;box-shadow:inset -1px -1px 0 #aca899;"><svg style="left:3.1px;top:4.5px" width="8" height="5" viewBox="0 0 8 5"><path d="M0.6 0.6 H7.4 L4 4.4 Z" fill="#9c9a8c"/></svg></div>
<div style="left:132.2px;top:621.8px;width:40.7px;height:20px;background:#ecebda;border:1px solid #151515;box-shadow:inset 1px 1px 0 #fafaf2,inset -1px -1px 0 #b8b6a6;"></div>
<span class="t" style="top:625.89px;font-size:10.3px;left:148.35px;color:#9c9a8c;">...</span>
<div style="left:35px;top:650.8px;width:11.8px;height:11.8px;border:2px solid #0a0a0a;border-radius:50%;background:#fff;"><div style="left:1.9px;top:1.9px;width:4px;height:4px;border-radius:50%;background:#000"></div></div>
<span class="t" style="top:651.89px;font-size:10.3px;left:51px;letter-spacing:-0.156px;">None</span>
<div style="left:35px;top:676.1px;width:11.8px;height:11.8px;border:2px solid #0a0a0a;border-radius:50%;background:#fff;"></div>
<span class="t" style="top:677.19px;font-size:10.3px;left:51px;letter-spacing:0.118px;">Copy files to</span>
<div style="left:132.2px;top:682.8px;width:40.7px;height:20px;background:#ecebda;border:1px solid #151515;box-shadow:inset 1px 1px 0 #fafaf2,inset -1px -1px 0 #b8b6a6;"></div>
<span class="t" style="top:686.89px;font-size:10.3px;left:148.35px;color:#222;">...</span>
<div style="left:35px;top:701.3px;width:11.8px;height:11.8px;border:2px solid #0a0a0a;border-radius:50%;background:#fff;"></div>
<span class="t" style="top:702.39px;font-size:10.3px;left:51px;letter-spacing:0.091px;">Move files to</span>
<div style="left:35px;top:726.1px;width:11.8px;height:11.8px;border:2px solid #0a0a0a;border-radius:50%;background:#fff;"></div>
<span class="t" style="top:727.19px;font-size:10.3px;left:51px;letter-spacing:0.022px;">Delete files</span>
<div style="left:3px;top:746.6px;width:986px;height:18px;background:#ece9d8;"></div>
<div style="left:3px;top:746.6px;width:986px;height:1px;background:#d2cfbf;"></div>
<span class="t" style="top:752.08px;font-size:10.5px;left:4.4px;letter-spacing:-0.152px;">Ready</span>
<div style="left:581.5px;top:748.6px;width:121px;height:15.6px;border:1px solid #fdfdf8;border-top-color:#b4b2a2;border-left-color:#b4b2a2;"></div>
<div style="left:704px;top:748.6px;width:133px;height:15.6px;border:1px solid #fdfdf8;border-top-color:#b4b2a2;border-left-color:#b4b2a2;"></div>
<div style="left:838.4px;top:748.6px;width:150.6px;height:15.6px;border:1px solid #fdfdf8;border-top-color:#b4b2a2;border-left-color:#b4b2a2;"></div>
<span class="t" style="top:752.08px;font-size:10.5px;left:583.6px;letter-spacing:-0.120px;">Found 65 items</span>
<span class="t" style="top:752.08px;font-size:10.5px;left:840.4px;letter-spacing:-0.016px;">Search time: 00:00:08</span>
<span class="t" style="top:747.24px;font-size:17px;left:935px;letter-spacing:0.272px;color:rgba(125,125,125,.3);-webkit-text-stroke:0;">na.cz</span>
<div style="left:209px;top:85.5px;width:780px;height:122px;background:#fff;border-left:1px solid #bdbaa8;border-top:1px solid #cfccbc;"></div>
<svg style="left:205px;top:84px" width="140" height="128" viewBox="0 0 840 768"><path d="M170 170 C185 110 220 60 330 42 C420 38 490 100 520 170 C545 205 585 225 612 240 C600 262 575 268 555 272 C548 300 560 320 592 352 C585 372 570 380 560 388 C565 405 560 415 566 428 L585 440 C600 470 598 500 615 520 C625 545 690 548 694 505 L694 470 L640 470 C640 500 625 500 610 470 L596 452 C585 470 560 478 540 474 C515 490 500 505 498 525 C500 590 515 650 522 700 L88 692 C100 640 120 590 150 545 C185 500 215 450 222 420 C190 405 160 390 140 352 C150 300 158 230 170 170 Z" fill="#f4f4f4"/></svg>
<span class="t" style="top:99.31px;font-size:10.8px;left:328.8px;letter-spacing:0.019px;font-weight:bold;-webkit-text-stroke:.3px #000;">02.Nocturne in B flat minor Opus 9 No.1.mp3</span>
<span class="t" style="top:114.09px;font-size:10.3px;left:328.8px;letter-spacing:-0.027px;color:#1a1a1a;-webkit-text-stroke:.08px #1a1a1a;">Location: \\XP\MyMusic</span>
<span class="t" style="top:127.44px;font-size:10.3px;left:328.8px;color:#1a1a1a;-webkit-text-stroke:.08px #1a1a1a;">Size(KB): 8816</span>
<span class="t" style="top:140.79px;font-size:10.3px;left:328.8px;letter-spacing:-0.047px;color:#1a1a1a;-webkit-text-stroke:.08px #1a1a1a;">Type: MP3 Format Sound</span>
<span class="t" style="top:154.14px;font-size:10.3px;left:328.8px;letter-spacing:-0.006px;color:#1a1a1a;-webkit-text-stroke:.08px #1a1a1a;">Created: 22/07/07 10:35:49 PM</span>
<span class="t" style="top:167.49px;font-size:10.3px;left:328.8px;letter-spacing:-0.009px;color:#1a1a1a;-webkit-text-stroke:.08px #1a1a1a;">Changed: 22/07/07 10:35:29 PM</span>
<div style="left:209px;top:208px;width:779px;height:376px;background:#fff;border:1px solid #383838;border-left:2px solid #3a3a3a;border-bottom:2px solid #454545;border-right:1px solid #6a6a64;"></div>
<div style="left:211px;top:224.5px;width:760px;height:19.87px;background:#f1f1f1;"></div>
<div style="left:211px;top:260.84px;width:760px;height:16.47px;background:#f1f1f1;"></div>
<div style="left:211px;top:293.78px;width:760px;height:16.47px;background:#f1f1f1;"></div>
<div style="left:211px;top:326.72px;width:760px;height:16.47px;background:#f1f1f1;"></div>
<div style="left:211px;top:359.66px;width:760px;height:16.47px;background:#f1f1f1;"></div>
<div style="left:211px;top:392.6px;width:760px;height:16.47px;background:#f1f1f1;"></div>
<div style="left:211px;top:425.54px;width:760px;height:16.47px;background:#f1f1f1;"></div>
<div style="left:211px;top:458.48px;width:760px;height:16.47px;background:#f1f1f1;"></div>
<div style="left:211px;top:491.42px;width:760px;height:16.47px;background:#f1f1f1;"></div>
<div style="left:211px;top:524.36px;width:760px;height:16.47px;background:#f1f1f1;"></div>
<div style="left:211px;top:557.3px;width:760px;height:10.2px;background:#f1f1f1;"></div>
<div style="left:229px;top:342.89px;width:742px;height:15.2px;background:#316ac5;"></div>
<svg style="left:212.8px;top:227.3px" width="15.5" height="14.5" viewBox="0 0 15.5 14.5"><path d="M3.6 0.5 H11.4 L14.6 3.6 V13.6 H3.6 Z" fill="#f2f6fc" stroke="#7f96c0" stroke-width="1"/><path d="M11.4 0.5 V3.6 H14.6" fill="#cdd9ee" stroke="#7f96c0" stroke-width=".8"/><circle cx="5.6" cy="9" r="5.1" fill="#2c3e5e"/><circle cx="5.6" cy="9" r="3.8" fill="#e4ecf2"/><path d="M1.8 9 A3.8 3.8 0 0 1 5.6 5.2 L5.6 9 Z" fill="#e0a23a"/><path d="M5.6 12.8 A3.8 3.8 0 0 0 9.4 9 L5.6 9 Z" fill="#58a846"/><path d="M9.4 9 A3.8 3.8 0 0 0 5.6 5.2 L5.6 9 Z" fill="#9ec88a"/><path d="M4.2 6.8 L7.8 9 L4.2 11.2 Z" fill="#0c1014"/></svg>
<span class="t" style="top:231.48px;font-size:10.5px;left:229.8px;letter-spacing:0.007px;">05. Track 5.mp3</span>
<span class="t" style="top:231.48px;font-size:10.5px;left:416px;letter-spacing:-0.224px;">\\XP\MyMusic</span>
<span class="t" style="top:231.48px;font-size:10.5px;left:687.30px;letter-spacing:-0.120px;">12584</span>
<span class="t" style="top:231.48px;font-size:10.5px;left:728px;letter-spacing:-0.111px;">MP3 Format So...</span>
<span class="t" style="top:231.48px;font-size:10.5px;left:824.6px;letter-spacing:0.058px;">22/07/07 10:35:50 PM</span>
<svg style="left:212.8px;top:243.77px" width="15.5" height="14.5" viewBox="0 0 15.5 14.5"><path d="M3.6 0.5 H11.4 L14.6 3.6 V13.6 H3.6 Z" fill="#f2f6fc" stroke="#7f96c0" stroke-width="1"/><path d="M11.4 0.5 V3.6 H14.6" fill="#cdd9ee" stroke="#7f96c0" stroke-width=".8"/><circle cx="5.6" cy="9" r="5.1" fill="#2c3e5e"/><circle cx="5.6" cy="9" r="3.8" fill="#e4ecf2"/><path d="M1.8 9 A3.8 3.8 0 0 1 5.6 5.2 L5.6 9 Z" fill="#e0a23a"/><path d="M5.6 12.8 A3.8 3.8 0 0 0 9.4 9 L5.6 9 Z" fill="#58a846"/><path d="M9.4 9 A3.8 3.8 0 0 0 5.6 5.2 L5.6 9 Z" fill="#9ec88a"/><path d="M4.2 6.8 L7.8 9 L4.2 11.2 Z" fill="#0c1014"/></svg>
<span class="t" style="top:247.95px;font-size:10.5px;left:229.8px;letter-spacing:0.007px;">05. Track 5.mp3</span>
<span class="t" style="top:247.95px;font-size:10.5px;left:416px;letter-spacing:0.036px;">\\XP\C$\Documents and Settings\Administrat...</span>
<span class="t" style="top:247.95px;font-size:10.5px;left:687.30px;letter-spacing:-0.120px;">12584</span>
<span class="t" style="top:247.95px;font-size:10.5px;left:728px;letter-spacing:-0.111px;">MP3 Format So...</span>
<span class="t" style="top:247.95px;font-size:10.5px;left:824.6px;letter-spacing:0.058px;">22/07/07 10:35:50 PM</span>
<svg style="left:212.8px;top:260.24px" width="15.5" height="14.5" viewBox="0 0 15.5 14.5"><path d="M3.6 0.5 H11.4 L14.6 3.6 V13.6 H3.6 Z" fill="#f2f6fc" stroke="#7f96c0" stroke-width="1"/><path d="M11.4 0.5 V3.6 H14.6" fill="#cdd9ee" stroke="#7f96c0" stroke-width=".8"/><circle cx="5.6" cy="9" r="5.1" fill="#2c3e5e"/><circle cx="5.6" cy="9" r="3.8" fill="#e4ecf2"/><path d="M1.8 9 A3.8 3.8 0 0 1 5.6 5.2 L5.6 9 Z" fill="#e0a23a"/><path d="M5.6 12.8 A3.8 3.8 0 0 0 9.4 9 L5.6 9 Z" fill="#58a846"/><path d="M9.4 9 A3.8 3.8 0 0 0 5.6 5.2 L5.6 9 Z" fill="#9ec88a"/><path d="M4.2 6.8 L7.8 9 L4.2 11.2 Z" fill="#0c1014"/></svg>
<span class="t" style="top:264.42px;font-size:10.5px;left:229.8px;letter-spacing:-0.110px;">Spooks - Things Ir've Seen.mp3</span>
<span class="t" style="top:264.42px;font-size:10.5px;left:416px;letter-spacing:0.036px;">\\XP\C$\Documents and Settings\Administrat...</span>
<span class="t" style="top:264.42px;font-size:10.5px;left:687.30px;letter-spacing:-0.120px;">10793</span>
<span class="t" style="top:264.42px;font-size:10.5px;left:728px;letter-spacing:-0.111px;">MP3 Format So...</span>
<span class="t" style="top:264.42px;font-size:10.5px;left:824.6px;letter-spacing:0.058px;">22/07/07 10:35:15 PM</span>
<svg style="left:212.8px;top:276.71px" width="15.5" height="14.5" viewBox="0 0 15.5 14.5"><path d="M3.6 0.5 H11.4 L14.6 3.6 V13.6 H3.6 Z" fill="#f2f6fc" stroke="#7f96c0" stroke-width="1"/><path d="M11.4 0.5 V3.6 H14.6" fill="#cdd9ee" stroke="#7f96c0" stroke-width=".8"/><circle cx="5.6" cy="9" r="5.1" fill="#2c3e5e"/><circle cx="5.6" cy="9" r="3.8" fill="#e4ecf2"/><path d="M1.8 9 A3.8 3.8 0 0 1 5.6 5.2 L5.6 9 Z" fill="#e0a23a"/><path d="M5.6 12.8 A3.8 3.8 0 0 0 9.4 9 L5.6 9 Z" fill="#58a846"/><path d="M9.4 9 A3.8 3.8 0 0 0 5.6 5.2 L5.6 9 Z" fill="#9ec88a"/><path d="M4.2 6.8 L7.8 9 L4.2 11.2 Z" fill="#0c1014"/></svg>
<span class="t" style="top:280.89px;font-size:10.5px;left:229.8px;letter-spacing:-0.110px;">Spooks - Things Ir've Seen.mp3</span>
<span class="t" style="top:280.89px;font-size:10.5px;left:416px;letter-spacing:-0.224px;">\\XP\MyMusic</span>
<span class="t" style="top:280.89px;font-size:10.5px;left:687.30px;letter-spacing:-0.120px;">10793</span>
<span class="t" style="top:280.89px;font-size:10.5px;left:728px;letter-spacing:-0.111px;">MP3 Format So...</span>
<span class="t" style="top:280.89px;font-size:10.5px;left:824.6px;letter-spacing:0.058px;">22/07/07 10:35:47 PM</span>
<svg style="left:212.8px;top:293.18px" width="15.5" height="14.5" viewBox="0 0 15.5 14.5"><path d="M3.6 0.5 H11.4 L14.6 3.6 V13.6 H3.6 Z" fill="#f2f6fc" stroke="#7f96c0" stroke-width="1"/><path d="M11.4 0.5 V3.6 H14.6" fill="#cdd9ee" stroke="#7f96c0" stroke-width=".8"/><circle cx="5.6" cy="9" r="5.1" fill="#2c3e5e"/><circle cx="5.6" cy="9" r="3.8" fill="#e4ecf2"/><path d="M1.8 9 A3.8 3.8 0 0 1 5.6 5.2 L5.6 9 Z" fill="#e0a23a"/><path d="M5.6 12.8 A3.8 3.8 0 0 0 9.4 9 L5.6 9 Z" fill="#58a846"/><path d="M9.4 9 A3.8 3.8 0 0 0 5.6 5.2 L5.6 9 Z" fill="#9ec88a"/><path d="M4.2 6.8 L7.8 9 L4.2 11.2 Z" fill="#0c1014"/></svg>
<span class="t" style="top:297.36px;font-size:10.5px;left:229.8px;letter-spacing:-0.110px;">Spooks - Things Ir've Seen.mp3</span>
<span class="t" style="top:297.36px;font-size:10.5px;left:416px;letter-spacing:0.036px;">\\XP\C$\Documents and Settings\Administrat...</span>
<span class="t" style="top:297.36px;font-size:10.5px;left:687.30px;letter-spacing:-0.120px;">10793</span>
<span class="t" style="top:297.36px;font-size:10.5px;left:728px;letter-spacing:-0.111px;">MP3 Format So...</span>
<span class="t" style="top:297.36px;font-size:10.5px;left:824.6px;letter-spacing:0.058px;">22/07/07 10:35:47 PM</span>
<svg style="left:212.8px;top:309.65px" width="15.5" height="14.5" viewBox="0 0 15.5 14.5"><path d="M3.6 0.5 H11.4 L14.6 3.6 V13.6 H3.6 Z" fill="#f2f6fc" stroke="#7f96c0" stroke-width="1"/><path d="M11.4 0.5 V3.6 H14.6" fill="#cdd9ee" stroke="#7f96c0" stroke-width=".8"/><circle cx="5.6" cy="9" r="5.1" fill="#2c3e5e"/><circle cx="5.6" cy="9" r="3.8" fill="#e4ecf2"/><path d="M1.8 9 A3.8 3.8 0 0 1 5.6 5.2 L5.6 9 Z" fill="#e0a23a"/><path d="M5.6 12.8 A3.8 3.8 0 0 0 9.4 9 L5.6 9 Z" fill="#58a846"/><path d="M9.4 9 A3.8 3.8 0 0 0 5.6 5.2 L5.6 9 Z" fill="#9ec88a"/><path d="M4.2 6.8 L7.8 9 L4.2 11.2 Z" fill="#0c1014"/></svg>
<span class="t" style="top:313.83px;font-size:10.5px;left:229.8px;letter-spacing:-0.421px;">01. CONCERTO POUR UNE VOIX.mp3</span>
<span class="t" style="top:313.83px;font-size:10.5px;left:416px;letter-spacing:-0.224px;">\\XP\MyMusic</span>
<span class="t" style="top:313.83px;font-size:10.5px;left:693.02px;letter-spacing:-0.120px;">9602</span>
<span class="t" style="top:313.83px;font-size:10.5px;left:728px;letter-spacing:-0.111px;">MP3 Format So...</span>
<span class="t" style="top:313.83px;font-size:10.5px;left:824.6px;letter-spacing:0.058px;">22/07/07 10:35:48 PM</span>
<svg style="left:212.8px;top:326.12px" width="15.5" height="14.5" viewBox="0 0 15.5 14.5"><path d="M3.6 0.5 H11.4 L14.6 3.6 V13.6 H3.6 Z" fill="#f2f6fc" stroke="#7f96c0" stroke-width="1"/><path d="M11.4 0.5 V3.6 H14.6" fill="#cdd9ee" stroke="#7f96c0" stroke-width=".8"/><circle cx="5.6" cy="9" r="5.1" fill="#2c3e5e"/><circle cx="5.6" cy="9" r="3.8" fill="#e4ecf2"/><path d="M1.8 9 A3.8 3.8 0 0 1 5.6 5.2 L5.6 9 Z" fill="#e0a23a"/><path d="M5.6 12.8 A3.8 3.8 0 0 0 9.4 9 L5.6 9 Z" fill="#58a846"/><path d="M9.4 9 A3.8 3.8 0 0 0 5.6 5.2 L5.6 9 Z" fill="#9ec88a"/><path d="M4.2 6.8 L7.8 9 L4.2 11.2 Z" fill="#0c1014"/></svg>
<span class="t" style="top:330.30px;font-size:10.5px;left:229.8px;letter-spacing:-0.421px;">01. CONCERTO POUR UNE VOIX.mp3</span>
<span class="t" style="top:330.30px;font-size:10.5px;left:416px;letter-spacing:0.036px;">\\XP\C$\Documents and Settings\Administrat...</span>
<span class="t" style="top:330.30px;font-size:10.5px;left:693.02px;letter-spacing:-0.120px;">9602</span>
<span class="t" style="top:330.30px;font-size:10.5px;left:728px;letter-spacing:-0.111px;">MP3 Format So...</span>
<span class="t" style="top:330.30px;font-size:10.5px;left:824.6px;letter-spacing:0.058px;">22/07/07 10:35:48 PM</span>
<svg style="left:212.8px;top:342.59px" width="15.5" height="14.5" viewBox="0 0 15.5 14.5"><path d="M3.6 0.5 H11.4 L14.6 3.6 V13.6 H3.6 Z" fill="#f2f6fc" stroke="#7f96c0" stroke-width="1"/><path d="M11.4 0.5 V3.6 H14.6" fill="#cdd9ee" stroke="#7f96c0" stroke-width=".8"/><circle cx="5.6" cy="9" r="5.1" fill="#2c3e5e"/><circle cx="5.6" cy="9" r="3.8" fill="#e4ecf2"/><path d="M1.8 9 A3.8 3.8 0 0 1 5.6 5.2 L5.6 9 Z" fill="#e0a23a"/><path d="M5.6 12.8 A3.8 3.8 0 0 0 9.4 9 L5.6 9 Z" fill="#58a846"/><path d="M9.4 9 A3.8 3.8 0 0 0 5.6 5.2 L5.6 9 Z" fill="#9ec88a"/><path d="M4.2 6.8 L7.8 9 L4.2 11.2 Z" fill="#0c1014"/><rect x="0" y="0" width="15.5" height="14.5" fill="#316ac5" opacity=".45"/></svg>
<span class="t" style="top:346.77px;font-size:10.5px;left:229.8px;letter-spacing:0.009px;color:#fff;">02.Nocturne in B flat minor Opus 9 ...</span>
<span class="t" style="top:346.77px;font-size:10.5px;left:416px;letter-spacing:-0.224px;color:#fff;">\\XP\MyMusic</span>
<span class="t" style="top:346.77px;font-size:10.5px;left:693.02px;letter-spacing:-0.120px;color:#fff;">8816</span>
<span class="t" style="top:346.77px;font-size:10.5px;left:728px;letter-spacing:-0.111px;color:#fff;">MP3 Format So...</span>
<span class="t" style="top:346.77px;font-size:10.5px;left:824.6px;letter-spacing:0.058px;color:#fff;">22/07/07 10:35:49 PM</span>
<svg style="left:212.8px;top:359.06px" width="15.5" height="14.5" viewBox="0 0 15.5 14.5"><path d="M3.6 0.5 H11.4 L14.6 3.6 V13.6 H3.6 Z" fill="#f2f6fc" stroke="#7f96c0" stroke-width="1"/><path d="M11.4 0.5 V3.6 H14.6" fill="#cdd9ee" stroke="#7f96c0" stroke-width=".8"/><circle cx="5.6" cy="9" r="5.1" fill="#2c3e5e"/><circle cx="5.6" cy="9" r="3.8" fill="#e4ecf2"/><path d="M1.8 9 A3.8 3.8 0 0 1 5.6 5.2 L5.6 9 Z" fill="#e0a23a"/><path d="M5.6 12.8 A3.8 3.8 0 0 0 9.4 9 L5.6 9 Z" fill="#58a846"/><path d="M9.4 9 A3.8 3.8 0 0 0 5.6 5.2 L5.6 9 Z" fill="#9ec88a"/><path d="M4.2 6.8 L7.8 9 L4.2 11.2 Z" fill="#0c1014"/></svg>
<span class="t" style="top:363.24px;font-size:10.5px;left:229.8px;letter-spacing:0.009px;">02.Nocturne in B flat minor Opus 9 ...</span>
<span class="t" style="top:363.24px;font-size:10.5px;left:416px;letter-spacing:0.036px;">\\XP\C$\Documents and Settings\Administrat...</span>
<span class="t" style="top:363.24px;font-size:10.5px;left:693.02px;letter-spacing:-0.120px;">8816</span>
<span class="t" style="top:363.24px;font-size:10.5px;left:728px;letter-spacing:-0.111px;">MP3 Format So...</span>
<span class="t" style="top:363.24px;font-size:10.5px;left:824.6px;letter-spacing:0.058px;">22/07/07 10:35:49 PM</span>
<svg style="left:212.8px;top:375.53px" width="15.5" height="14.5" viewBox="0 0 15.5 14.5"><path d="M3.6 0.5 H11.4 L14.6 3.6 V13.6 H3.6 Z" fill="#f2f6fc" stroke="#7f96c0" stroke-width="1"/><path d="M11.4 0.5 V3.6 H14.6" fill="#cdd9ee" stroke="#7f96c0" stroke-width=".8"/><circle cx="5.6" cy="9" r="5.1" fill="#2c3e5e"/><circle cx="5.6" cy="9" r="3.8" fill="#e4ecf2"/><path d="M1.8 9 A3.8 3.8 0 0 1 5.6 5.2 L5.6 9 Z" fill="#e0a23a"/><path d="M5.6 12.8 A3.8 3.8 0 0 0 9.4 9 L5.6 9 Z" fill="#58a846"/><path d="M9.4 9 A3.8 3.8 0 0 0 5.6 5.2 L5.6 9 Z" fill="#9ec88a"/><path d="M4.2 6.8 L7.8 9 L4.2 11.2 Z" fill="#0c1014"/></svg>
<span class="t" style="top:379.71px;font-size:10.5px;left:229.8px;letter-spacing:-0.021px;">Charlies Angels Soundtrack - [12] - ...</span>
<span class="t" style="top:379.71px;font-size:10.5px;left:416px;letter-spacing:0.036px;">\\XP\C$\Documents and Settings\Administrat...</span>
<span class="t" style="top:379.71px;font-size:10.5px;left:728px;letter-spacing:-0.111px;">MP3 Format So...</span>
<span class="t" style="top:379.71px;font-size:10.5px;left:824.6px;letter-spacing:0.058px;">22/07/07 10:35:51 PM</span>
<svg style="left:212.8px;top:392px" width="15.5" height="14.5" viewBox="0 0 15.5 14.5"><path d="M3.6 0.5 H11.4 L14.6 3.6 V13.6 H3.6 Z" fill="#f2f6fc" stroke="#7f96c0" stroke-width="1"/><path d="M11.4 0.5 V3.6 H14.6" fill="#cdd9ee" stroke="#7f96c0" stroke-width=".8"/><circle cx="5.6" cy="9" r="5.1" fill="#2c3e5e"/><circle cx="5.6" cy="9" r="3.8" fill="#e4ecf2"/><path d="M1.8 9 A3.8 3.8 0 0 1 5.6 5.2 L5.6 9 Z" fill="#e0a23a"/><path d="M5.6 12.8 A3.8 3.8 0 0 0 9.4 9 L5.6 9 Z" fill="#58a846"/><path d="M9.4 9 A3.8 3.8 0 0 0 5.6 5.2 L5.6 9 Z" fill="#9ec88a"/><path d="M4.2 6.8 L7.8 9 L4.2 11.2 Z" fill="#0c1014"/></svg>
<span class="t" style="top:396.18px;font-size:10.5px;left:229.8px;letter-spacing:-0.021px;">Charlies Angels Soundtrack - [12] - ...</span>
<span class="t" style="top:396.18px;font-size:10.5px;left:416px;letter-spacing:-0.224px;">\\XP\MyMusic</span>
<span class="t" style="top:396.18px;font-size:10.5px;left:728px;letter-spacing:-0.111px;">MP3 Format So...</span>
<span class="t" style="top:396.18px;font-size:10.5px;left:824.6px;letter-spacing:0.058px;">22/07/07 10:35:51 PM</span>
<svg style="left:212.8px;top:408.47px" width="15.5" height="14.5" viewBox="0 0 15.5 14.5"><path d="M3.6 0.5 H11.4 L14.6 3.6 V13.6 H3.6 Z" fill="#f2f6fc" stroke="#7f96c0" stroke-width="1"/><path d="M11.4 0.5 V3.6 H14.6" fill="#cdd9ee" stroke="#7f96c0" stroke-width=".8"/><circle cx="5.6" cy="9" r="5.1" fill="#2c3e5e"/><circle cx="5.6" cy="9" r="3.8" fill="#e4ecf2"/><path d="M1.8 9 A3.8 3.8 0 0 1 5.6 5.2 L5.6 9 Z" fill="#e0a23a"/><path d="M5.6 12.8 A3.8 3.8 0 0 0 9.4 9 L5.6 9 Z" fill="#58a846"/><path d="M9.4 9 A3.8 3.8 0 0 0 5.6 5.2 L5.6 9 Z" fill="#9ec88a"/><path d="M4.2 6.8 L7.8 9 L4.2 11.2 Z" fill="#0c1014"/></svg>
<span class="t" style="top:412.65px;font-size:10.5px;left:229.8px;letter-spacing:-0.047px;">Rob Thomas - 06 - Something To Be...</span>
<span class="t" style="top:412.65px;font-size:10.5px;left:416px;letter-spacing:-0.224px;">\\XP\MyMusic</span>
<span class="t" style="top:412.65px;font-size:10.5px;left:728px;letter-spacing:-0.111px;">MP3 Format So...</span>
<span class="t" style="top:412.65px;font-size:10.5px;left:824.6px;letter-spacing:0.058px;">22/07/07 10:35:53 PM</span>
<svg style="left:212.8px;top:424.94px" width="15.5" height="14.5" viewBox="0 0 15.5 14.5"><path d="M3.6 0.5 H11.4 L14.6 3.6 V13.6 H3.6 Z" fill="#f2f6fc" stroke="#7f96c0" stroke-width="1"/><path d="M11.4 0.5 V3.6 H14.6" fill="#cdd9ee" stroke="#7f96c0" stroke-width=".8"/><circle cx="5.6" cy="9" r="5.1" fill="#2c3e5e"/><circle cx="5.6" cy="9" r="3.8" fill="#e4ecf2"/><path d="M1.8 9 A3.8 3.8 0 0 1 5.6 5.2 L5.6 9 Z" fill="#e0a23a"/><path d="M5.6 12.8 A3.8 3.8 0 0 0 9.4 9 L5.6 9 Z" fill="#58a846"/><path d="M9.4 9 A3.8 3.8 0 0 0 5.6 5.2 L5.6 9 Z" fill="#9ec88a"/><path d="M4.2 6.8 L7.8 9 L4.2 11.2 Z" fill="#0c1014"/></svg>
<span class="t" style="top:429.12px;font-size:10.5px;left:229.8px;letter-spacing:-0.047px;">Rob Thomas - 06 - Something To Be...</span>
<span class="t" style="top:429.12px;font-size:10.5px;left:416px;letter-spacing:0.036px;">\\XP\C$\Documents and Settings\Administrat...</span>
<span class="t" style="top:429.12px;font-size:10.5px;left:728px;letter-spacing:-0.111px;">MP3 Format So...</span>
<span class="t" style="top:429.12px;font-size:10.5px;left:824.6px;letter-spacing:0.058px;">22/07/07 10:35:53 PM</span>
<svg style="left:212.8px;top:441.41px" width="15.5" height="14.5" viewBox="0 0 15.5 14.5"><path d="M3.6 0.5 H11.4 L14.6 3.6 V13.6 H3.6 Z" fill="#f2f6fc" stroke="#7f96c0" stroke-width="1"/><path d="M11.4 0.5 V3.6 H14.6" fill="#cdd9ee" stroke="#7f96c0" stroke-width=".8"/><circle cx="5.6" cy="9" r="5.1" fill="#2c3e5e"/><circle cx="5.6" cy="9" r="3.8" fill="#e4ecf2"/><path d="M1.8 9 A3.8 3.8 0 0 1 5.6 5.2 L5.6 9 Z" fill="#e0a23a"/><path d="M5.6 12.8 A3.8 3.8 0 0 0 9.4 9 L5.6 9 Z" fill="#58a846"/><path d="M9.4 9 A3.8 3.8 0 0 0 5.6 5.2 L5.6 9 Z" fill="#9ec88a"/><path d="M4.2 6.8 L7.8 9 L4.2 11.2 Z" fill="#0c1014"/></svg>
<span class="t" style="top:445.59px;font-size:10.5px;left:229.8px;letter-spacing:-0.061px;">01 Limp Bizkit- Take a look arround....</span>
<span class="t" style="top:445.59px;font-size:10.5px;left:416px;letter-spacing:-0.224px;">\\XP\MyMusic</span>
<span class="t" style="top:445.59px;font-size:10.5px;left:728px;letter-spacing:-0.111px;">MP3 Format So...</span>
<span class="t" style="top:445.59px;font-size:10.5px;left:824.6px;letter-spacing:0.058px;">22/07/07 10:35:48 PM</span>
<svg style="left:212.8px;top:457.88px" width="15.5" height="14.5" viewBox="0 0 15.5 14.5"><path d="M3.6 0.5 H11.4 L14.6 3.6 V13.6 H3.6 Z" fill="#f2f6fc" stroke="#7f96c0" stroke-width="1"/><path d="M11.4 0.5 V3.6 H14.6" fill="#cdd9ee" stroke="#7f96c0" stroke-width=".8"/><circle cx="5.6" cy="9" r="5.1" fill="#2c3e5e"/><circle cx="5.6" cy="9" r="3.8" fill="#e4ecf2"/><path d="M1.8 9 A3.8 3.8 0 0 1 5.6 5.2 L5.6 9 Z" fill="#e0a23a"/><path d="M5.6 12.8 A3.8 3.8 0 0 0 9.4 9 L5.6 9 Z" fill="#58a846"/><path d="M9.4 9 A3.8 3.8 0 0 0 5.6 5.2 L5.6 9 Z" fill="#9ec88a"/><path d="M4.2 6.8 L7.8 9 L4.2 11.2 Z" fill="#0c1014"/></svg>
<span class="t" style="top:462.06px;font-size:10.5px;left:229.8px;letter-spacing:-0.061px;">01 Limp Bizkit- Take a look arround....</span>
<span class="t" style="top:462.06px;font-size:10.5px;left:416px;letter-spacing:0.036px;">\\XP\C$\Documents and Settings\Administrat...</span>
<span class="t" style="top:462.06px;font-size:10.5px;left:728px;letter-spacing:-0.111px;">MP3 Format So...</span>
<span class="t" style="top:462.06px;font-size:10.5px;left:824.6px;letter-spacing:0.058px;">22/07/07 10:35:48 PM</span>
<svg style="left:212.8px;top:474.35px" width="15.5" height="14.5" viewBox="0 0 15.5 14.5"><path d="M3.6 0.5 H11.4 L14.6 3.6 V13.6 H3.6 Z" fill="#f2f6fc" stroke="#7f96c0" stroke-width="1"/><path d="M11.4 0.5 V3.6 H14.6" fill="#cdd9ee" stroke="#7f96c0" stroke-width=".8"/><circle cx="5.6" cy="9" r="5.1" fill="#2c3e5e"/><circle cx="5.6" cy="9" r="3.8" fill="#e4ecf2"/><path d="M1.8 9 A3.8 3.8 0 0 1 5.6 5.2 L5.6 9 Z" fill="#e0a23a"/><path d="M5.6 12.8 A3.8 3.8 0 0 0 9.4 9 L5.6 9 Z" fill="#58a846"/><path d="M9.4 9 A3.8 3.8 0 0 0 5.6 5.2 L5.6 9 Z" fill="#9ec88a"/><path d="M4.2 6.8 L7.8 9 L4.2 11.2 Z" fill="#0c1014"/></svg>
<span class="t" style="top:478.53px;font-size:10.5px;left:229.8px;letter-spacing:0.006px;">waiting_for_the_miracle.mp3</span>
<span class="t" style="top:478.53px;font-size:10.5px;left:416px;letter-spacing:-0.224px;">\\XP\MyMusic</span>
<span class="t" style="top:478.53px;font-size:10.5px;left:728px;letter-spacing:-0.111px;">MP3 Format So...</span>
<span class="t" style="top:478.53px;font-size:10.5px;left:824.6px;letter-spacing:0.058px;">22/07/07 10:35:47 PM</span>
<svg style="left:212.8px;top:490.82px" width="15.5" height="14.5" viewBox="0 0 15.5 14.5"><path d="M3.6 0.5 H11.4 L14.6 3.6 V13.6 H3.6 Z" fill="#f2f6fc" stroke="#7f96c0" stroke-width="1"/><path d="M11.4 0.5 V3.6 H14.6" fill="#cdd9ee" stroke="#7f96c0" stroke-width=".8"/><circle cx="5.6" cy="9" r="5.1" fill="#2c3e5e"/><circle cx="5.6" cy="9" r="3.8" fill="#e4ecf2"/><path d="M1.8 9 A3.8 3.8 0 0 1 5.6 5.2 L5.6 9 Z" fill="#e0a23a"/><path d="M5.6 12.8 A3.8 3.8 0 0 0 9.4 9 L5.6 9 Z" fill="#58a846"/><path d="M9.4 9 A3.8 3.8 0 0 0 5.6 5.2 L5.6 9 Z" fill="#9ec88a"/><path d="M4.2 6.8 L7.8 9 L4.2 11.2 Z" fill="#0c1014"/></svg>
<span class="t" style="top:495.00px;font-size:10.5px;left:229.8px;letter-spacing:0.006px;">waiting_for_the_miracle.mp3</span>
<span class="t" style="top:495.00px;font-size:10.5px;left:416px;letter-spacing:0.036px;">\\XP\C$\Documents and Settings\Administrat...</span>
<span class="t" style="top:495.00px;font-size:10.5px;left:728px;letter-spacing:-0.111px;">MP3 Format So...</span>
<span class="t" style="top:495.00px;font-size:10.5px;left:824.6px;letter-spacing:0.058px;">22/07/07 10:35:47 PM</span>
<svg style="left:212.8px;top:507.29px" width="15.5" height="14.5" viewBox="0 0 15.5 14.5"><path d="M3.6 0.5 H11.4 L14.6 3.6 V13.6 H3.6 Z" fill="#f2f6fc" stroke="#7f96c0" stroke-width="1"/><path d="M11.4 0.5 V3.6 H14.6" fill="#cdd9ee" stroke="#7f96c0" stroke-width=".8"/><circle cx="5.6" cy="9" r="5.1" fill="#2c3e5e"/><circle cx="5.6" cy="9" r="3.8" fill="#e4ecf2"/><path d="M1.8 9 A3.8 3.8 0 0 1 5.6 5.2 L5.6 9 Z" fill="#e0a23a"/><path d="M5.6 12.8 A3.8 3.8 0 0 0 9.4 9 L5.6 9 Z" fill="#58a846"/><path d="M9.4 9 A3.8 3.8 0 0 0 5.6 5.2 L5.6 9 Z" fill="#9ec88a"/><path d="M4.2 6.8 L7.8 9 L4.2 11.2 Z" fill="#0c1014"/></svg>
<span class="t" style="top:511.47px;font-size:10.5px;left:229.8px;letter-spacing:0.042px;">003-d12_-_my_band-ministry.mp3</span>
<span class="t" style="top:511.47px;font-size:10.5px;left:416px;letter-spacing:0.036px;">\\XP\C$\Documents and Settings\Administrat...</span>
<span class="t" style="top:511.47px;font-size:10.5px;left:728px;letter-spacing:-0.111px;">MP3 Format So...</span>
<span class="t" style="top:511.47px;font-size:10.5px;left:824.6px;letter-spacing:0.058px;">22/07/07 10:35:49 PM</span>
<svg style="left:212.8px;top:523.76px" width="15.5" height="14.5" viewBox="0 0 15.5 14.5"><path d="M3.6 0.5 H11.4 L14.6 3.6 V13.6 H3.6 Z" fill="#f2f6fc" stroke="#7f96c0" stroke-width="1"/><path d="M11.4 0.5 V3.6 H14.6" fill="#cdd9ee" stroke="#7f96c0" stroke-width=".8"/><circle cx="5.6" cy="9" r="5.1" fill="#2c3e5e"/><circle cx="5.6" cy="9" r="3.8" fill="#e4ecf2"/><path d="M1.8 9 A3.8 3.8 0 0 1 5.6 5.2 L5.6 9 Z" fill="#e0a23a"/><path d="M5.6 12.8 A3.8 3.8 0 0 0 9.4 9 L5.6 9 Z" fill="#58a846"/><path d="M9.4 9 A3.8 3.8 0 0 0 5.6 5.2 L5.6 9 Z" fill="#9ec88a"/><path d="M4.2 6.8 L7.8 9 L4.2 11.2 Z" fill="#0c1014"/></svg>
<span class="t" style="top:527.94px;font-size:10.5px;left:229.8px;letter-spacing:0.042px;">003-d12_-_my_band-ministry.mp3</span>
<span class="t" style="top:527.94px;font-size:10.5px;left:416px;letter-spacing:-0.224px;">\\XP\MyMusic</span>
<span class="t" style="top:527.94px;font-size:10.5px;left:728px;letter-spacing:-0.111px;">MP3 Format So...</span>
<span class="t" style="top:527.94px;font-size:10.5px;left:824.6px;letter-spacing:0.058px;">22/07/07 10:35:49 PM</span>
<svg style="left:212.8px;top:540.23px" width="15.5" height="14.5" viewBox="0 0 15.5 14.5"><path d="M3.6 0.5 H11.4 L14.6 3.6 V13.6 H3.6 Z" fill="#f2f6fc" stroke="#7f96c0" stroke-width="1"/><path d="M11.4 0.5 V3.6 H14.6" fill="#cdd9ee" stroke="#7f96c0" stroke-width=".8"/><circle cx="5.6" cy="9" r="5.1" fill="#2c3e5e"/><circle cx="5.6" cy="9" r="3.8" fill="#e4ecf2"/><path d="M1.8 9 A3.8 3.8 0 0 1 5.6 5.2 L5.6 9 Z" fill="#e0a23a"/><path d="M5.6 12.8 A3.8 3.8 0 0 0 9.4 9 L5.6 9 Z" fill="#58a846"/><path d="M9.4 9 A3.8 3.8 0 0 0 5.6 5.2 L5.6 9 Z" fill="#9ec88a"/><path d="M4.2 6.8 L7.8 9 L4.2 11.2 Z" fill="#0c1014"/></svg>
<span class="t" style="top:544.41px;font-size:10.5px;left:229.8px;letter-spacing:-0.033px;">01. Track 1.mp3</span>
<span class="t" style="top:544.41px;font-size:10.5px;left:416px;letter-spacing:-0.224px;">\\XP\MyMusic</span>
<span class="t" style="top:544.41px;font-size:10.5px;left:728px;letter-spacing:-0.111px;">MP3 Format So...</span>
<span class="t" style="top:544.41px;font-size:10.5px;left:824.6px;letter-spacing:0.058px;">22/07/07 10:35:48 PM</span>
<div style="left:211px;top:557.3px;width:760px;height:10.2px;overflow:hidden;">
<svg style="left:1.8px;top:-0.6px" width="15.5" height="14.5" viewBox="0 0 15.5 14.5"><path d="M3.6 0.5 H11.4 L14.6 3.6 V13.6 H3.6 Z" fill="#f2f6fc" stroke="#7f96c0" stroke-width="1"/><path d="M11.4 0.5 V3.6 H14.6" fill="#cdd9ee" stroke="#7f96c0" stroke-width=".8"/><circle cx="5.6" cy="9" r="5.1" fill="#2c3e5e"/><circle cx="5.6" cy="9" r="3.8" fill="#e4ecf2"/><path d="M1.8 9 A3.8 3.8 0 0 1 5.6 5.2 L5.6 9 Z" fill="#e0a23a"/><path d="M5.6 12.8 A3.8 3.8 0 0 0 9.4 9 L5.6 9 Z" fill="#58a846"/><path d="M9.4 9 A3.8 3.8 0 0 0 5.6 5.2 L5.6 9 Z" fill="#9ec88a"/><path d="M4.2 6.8 L7.8 9 L4.2 11.2 Z" fill="#0c1014"/></svg>
<span class="t" style="top:3.58px;font-size:10.5px;left:18.8px;letter-spacing:-0.033px;">01. Track 1.mp3</span>
<span class="t" style="top:3.58px;font-size:10.5px;left:205px;letter-spacing:0.036px;">\\XP\C$\Documents and Settings\Administrat...</span>
<span class="t" style="top:3.58px;font-size:10.5px;left:517px;letter-spacing:-0.111px;">MP3 Format So...</span>
<span class="t" style="top:3.58px;font-size:10.5px;left:613.6px;letter-spacing:0.058px;">22/07/07 10:35:48 PM</span>
</div>
<div style="left:211px;top:209px;width:761px;height:15.5px;background:linear-gradient(180deg,#f2f0e4,#ebe8d6 70%,#dedbc8 90%,#c8c5b2);"></div>
<div style="left:211px;top:223.6px;width:761px;height:1.2px;background:#7c7a6c;"></div>
<div style="left:410px;top:209.5px;width:1px;height:14.5px;background:#8f8d7e;"></div>
<div style="left:411px;top:209.5px;width:1px;height:14.5px;background:#fdfdf8;"></div>
<div style="left:642px;top:209.5px;width:1px;height:14.5px;background:#8f8d7e;"></div>
<div style="left:643px;top:209.5px;width:1px;height:14.5px;background:#fdfdf8;"></div>
<div style="left:721px;top:209.5px;width:1px;height:14.5px;background:#8f8d7e;"></div>
<div style="left:722px;top:209.5px;width:1px;height:14.5px;background:#fdfdf8;"></div>
<div style="left:818.6px;top:209.5px;width:1px;height:14.5px;background:#8f8d7e;"></div>
<div style="left:819.6px;top:209.5px;width:1px;height:14.5px;background:#fdfdf8;"></div>
<span class="t" style="top:211.58px;font-size:10.5px;left:216px;letter-spacing:-0.129px;">Name</span>
<span class="t" style="top:211.58px;font-size:10.5px;left:415.8px;letter-spacing:0.100px;">Location</span>
<span class="t" style="top:211.58px;font-size:10.5px;left:668.7px;letter-spacing:-0.430px;">Size(KB)</span>
<span class="t" style="top:211.58px;font-size:10.5px;left:728px;letter-spacing:-0.066px;">Type</span>
<span class="t" style="top:211.58px;font-size:10.5px;left:824.6px;letter-spacing:0.020px;">Created</span>
<svg style="left:649.4px;top:212.6px" width="13" height="7" viewBox="0 0 13 7"><path d="M0.4 0.4 H12.6 L6.5 6.6 Z" fill="#2f9ade"/><path d="M2.2 1.2 H10.8 L6.5 5.4 Z" fill="#56b8f0"/></svg>
<div style="left:972px;top:209px;width:15px;height:358px;background:linear-gradient(90deg,#f4f3ee,#fcfcf9 45%,#fffffe);"></div>
<div style="left:972.5px;top:210px;width:12.8px;height:13.6px;background:linear-gradient(135deg,#d6e2fe,#bccffa 60%,#aec2f4);border:1px solid #e6eeff;border-radius:2.5px;box-shadow:0 0 0 .5px #b4c6ee;"><svg style="left:0;top:0" width="10.8" height="11.6" viewBox="0 0 13.6 13.6" preserveAspectRatio="none"><path d="M3.2 8.6 L6.8 5 L10.4 8.6" fill="none" stroke="#3e568c" stroke-width="2.1"/></svg></div>
<div style="left:972.5px;top:226px;width:12.8px;height:98px;background:linear-gradient(90deg,#cadafd,#c0d2fb 50%,#b4c8f6);border:1px solid #e6eeff;border-radius:2.5px;box-shadow:0 0 0 .5px #a8bcec;"><div style="left:3.5px;top:45px;width:3.8px;height:1px;background:#eef3ff;box-shadow:0 1px 0 #8ea6dc"></div><div style="left:3.5px;top:47px;width:3.8px;height:1px;background:#eef3ff;box-shadow:0 1px 0 #8ea6dc"></div><div style="left:3.5px;top:49px;width:3.8px;height:1px;background:#eef3ff;box-shadow:0 1px 0 #8ea6dc"></div><div style="left:3.5px;top:51px;width:3.8px;height:1px;background:#eef3ff;box-shadow:0 1px 0 #8ea6dc"></div></div>
<div style="left:972.5px;top:551.3px;width:12.8px;height:13.6px;background:linear-gradient(135deg,#d6e2fe,#bccffa 60%,#aec2f4);border:1px solid #e6eeff;border-radius:2.5px;box-shadow:0 0 0 .5px #b4c6ee;"><svg style="left:0;top:0" width="10.8" height="11.6" viewBox="0 0 13.6 13.6" preserveAspectRatio="none"><path d="M3.2 5.2 L6.8 8.8 L10.4 5.2" fill="none" stroke="#3e568c" stroke-width="2.1"/></svg></div>
<div style="left:211px;top:567.5px;width:761px;height:14.5px;background:linear-gradient(180deg,#f4f3ee,#fcfcf9 45%,#fffffe);"></div>
<div style="left:212.4px;top:568px;width:13.4px;height:13.4px;background:linear-gradient(135deg,#d6e2fe,#bccffa 60%,#aec2f4);border:1px solid #e6eeff;border-radius:2.5px;box-shadow:0 0 0 .5px #b4c6ee;"><svg style="left:0;top:0" width="11.4" height="11.4" viewBox="0 0 13.6 13.6" preserveAspectRatio="none"><path d="M8.4 3.4 L4.8 7 L8.4 10.6" fill="none" stroke="#3e568c" stroke-width="2.1"/></svg></div>
<div style="left:228px;top:568px;width:400px;height:13.4px;background:linear-gradient(180deg,#cadafd,#c0d2fb 50%,#b4c8f6);border:1px solid #e6eeff;border-radius:2.5px;box-shadow:0 0 0 .5px #a8bcec;"></div>
<div style="left:955.6px;top:568px;width:13.4px;height:13.4px;background:linear-gradient(135deg,#d6e2fe,#bccffa 60%,#aec2f4);border:1px solid #e6eeff;border-radius:2.5px;box-shadow:0 0 0 .5px #b4c6ee;"><svg style="left:0;top:0" width="11.4" height="11.4" viewBox="0 0 13.6 13.6" preserveAspectRatio="none"><path d="M5.4 3.4 L9 7 L5.4 10.6" fill="none" stroke="#3e568c" stroke-width="2.1"/></svg></div>
<div style="left:972px;top:567.5px;width:15px;height:14.5px;background:#ece9d8;"></div>
<div style="left:209px;top:584px;width:780px;height:4px;background:#f3f1e7;"></div>
<div style="left:210px;top:587.5px;width:777.5px;height:159px;background:#fff;border:1px solid #9a988a;border-top-color:#8a887a;"></div>
<div style="left:211px;top:588.5px;width:761.5px;height:157px;overflow:hidden;">
<svg style="left:2.8px;top:3.8px" width="13.4" height="13.6" viewBox="0 0 13.4 13.6"><rect x="0.4" y="0.4" width="12.4" height="12.6" rx="1.6" fill="#d8542c" stroke="#b83c1c" stroke-width=".8"/><rect x="1.4" y="1.2" width="10.4" height="5" rx="1.2" fill="#e88a66" opacity=".6"/><ellipse cx="6.6" cy="6.7" rx="2.9" ry="3.6" fill="none" stroke="#fff" stroke-width="1.7"/></svg>
<span class="t" style="top:5.13px;font-size:10.4px;left:18.6px;letter-spacing:0.060px;color:#16166e;">09/09/07 9:35:22 AM - Search ended on 09/09/07 9:35:22 AM</span>
<div style="left:489px;top:2.8px;width:300px;height:16px;background:#fff;"></div>
<svg style="left:2.2px;top:19.7px" width="13.4" height="14.4" viewBox="0 0 13.4 14.4"><path d="M6.6 0.7 C10 0.7 12.6 2.9 12.6 5.7 C12.6 7.6 11.4 9.2 9.6 10.1 L7.4 13.6 L6.4 10.7 C3.1 10.6 0.7 8.4 0.7 5.7 C0.7 2.9 3.3 0.7 6.6 0.7 Z" fill="#fdfdfd" stroke="#2a2a2a" stroke-width="1.35"/><circle cx="6.7" cy="3" r="1.4" fill="#1c1cb0"/><path d="M4.9 4.8 H7.9 V8 H8.9 V9.3 H4.6 V8 H5.7 V6 H4.9 Z" fill="#1c1cb0"/></svg>
<span class="t" style="top:21.63px;font-size:10.4px;left:18.6px;letter-spacing:0.060px;">09/09/07 9:35:22 AM - (4) Searching in \\XP\ADMIN$\WinSxS\x86_Microsoft.Windows.Common-Controls_6595b64144ccf1df</span>
<div style="left:489px;top:19.3px;width:300px;height:16px;background:#fff;"></div>
<svg style="left:2.2px;top:36.2px" width="13.4" height="14.4" viewBox="0 0 13.4 14.4"><path d="M6.6 0.7 C10 0.7 12.6 2.9 12.6 5.7 C12.6 7.6 11.4 9.2 9.6 10.1 L7.4 13.6 L6.4 10.7 C3.1 10.6 0.7 8.4 0.7 5.7 C0.7 2.9 3.3 0.7 6.6 0.7 Z" fill="#fdfdfd" stroke="#2a2a2a" stroke-width="1.35"/><circle cx="6.7" cy="3" r="1.4" fill="#1c1cb0"/><path d="M4.9 4.8 H7.9 V8 H8.9 V9.3 H4.6 V8 H5.7 V6 H4.9 Z" fill="#1c1cb0"/></svg>
<span class="t" style="top:38.13px;font-size:10.4px;left:18.6px;letter-spacing:0.060px;">09/09/07 9:35:22 AM - (4) Searching in \\XP\ADMIN$\WinSxS\x86_Microsoft.Windows.Common-Controls_6595b64144ccf1df</span>
<div style="left:489px;top:35.8px;width:300px;height:16px;background:#fff;"></div>
<svg style="left:2.2px;top:52.7px" width="13.4" height="14.4" viewBox="0 0 13.4 14.4"><path d="M6.6 0.7 C10 0.7 12.6 2.9 12.6 5.7 C12.6 7.6 11.4 9.2 9.6 10.1 L7.4 13.6 L6.4 10.7 C3.1 10.6 0.7 8.4 0.7 5.7 C0.7 2.9 3.3 0.7 6.6 0.7 Z" fill="#fdfdfd" stroke="#2a2a2a" stroke-width="1.35"/><circle cx="6.7" cy="3" r="1.4" fill="#1c1cb0"/><path d="M4.9 4.8 H7.9 V8 H8.9 V9.3 H4.6 V8 H5.7 V6 H4.9 Z" fill="#1c1cb0"/></svg>
<span class="t" style="top:54.63px;font-size:10.4px;left:18.6px;letter-spacing:0.060px;">09/09/07 9:35:22 AM - (4) Searching in \\XP\ADMIN$\WinSxS\x86_Microsoft.Windows.Common-Controls_6595b64144ccf1df</span>
<div style="left:607.4px;top:52.3px;width:154.1px;height:16px;background:#fff;"></div>
<span class="t" style="top:54.63px;font-size:10.4px;left:608.4px;letter-spacing:-0.021px;">_5.2.2.3_en_16a24bc0</span>
<svg style="left:2.2px;top:69.2px" width="13.4" height="14.4" viewBox="0 0 13.4 14.4"><path d="M6.6 0.7 C10 0.7 12.6 2.9 12.6 5.7 C12.6 7.6 11.4 9.2 9.6 10.1 L7.4 13.6 L6.4 10.7 C3.1 10.6 0.7 8.4 0.7 5.7 C0.7 2.9 3.3 0.7 6.6 0.7 Z" fill="#fdfdfd" stroke="#2a2a2a" stroke-width="1.35"/><circle cx="6.7" cy="3" r="1.4" fill="#1c1cb0"/><path d="M4.9 4.8 H7.9 V8 H8.9 V9.3 H4.6 V8 H5.7 V6 H4.9 Z" fill="#1c1cb0"/></svg>
<span class="t" style="top:71.13px;font-size:10.4px;left:18.6px;letter-spacing:0.060px;">09/09/07 9:35:22 AM - (4) Searching in \\XP\ADMIN$\WinSxS\x86_Microsoft.Windows.Common-Controls_6595b64144ccf1df</span>
<div style="left:604.8px;top:68.8px;width:156.7px;height:16px;background:#fff;"></div>
<span class="t" style="top:71.13px;font-size:10.4px;left:605.8px;letter-spacing:0.256px;">5.2.2.3_x-ww_d6bd8b95</span>
<svg style="left:2.2px;top:85.7px" width="13.4" height="14.4" viewBox="0 0 13.4 14.4"><path d="M6.6 0.7 C10 0.7 12.6 2.9 12.6 5.7 C12.6 7.6 11.4 9.2 9.6 10.1 L7.4 13.6 L6.4 10.7 C3.1 10.6 0.7 8.4 0.7 5.7 C0.7 2.9 3.3 0.7 6.6 0.7 Z" fill="#fdfdfd" stroke="#2a2a2a" stroke-width="1.35"/><circle cx="6.7" cy="3" r="1.4" fill="#1c1cb0"/><path d="M4.9 4.8 H7.9 V8 H8.9 V9.3 H4.6 V8 H5.7 V6 H4.9 Z" fill="#1c1cb0"/></svg>
<span class="t" style="top:87.63px;font-size:10.4px;left:18.6px;letter-spacing:0.060px;">09/09/07 9:35:22 AM - (4) Searching in \\XP\ADMIN$\WinSxS\x86_Microsoft.Windows.Common-Controls_6595b64144ccf1df</span>
<div style="left:607px;top:85.3px;width:154.5px;height:16px;background:#fff;"></div>
<span class="t" style="top:87.63px;font-size:10.4px;left:608px;letter-spacing:0.154px;">_5.2.2.3_x-ww_468466a7</span>
<svg style="left:2.2px;top:102.2px" width="13.4" height="14.4" viewBox="0 0 13.4 14.4"><path d="M6.6 0.7 C10 0.7 12.6 2.9 12.6 5.7 C12.6 7.6 11.4 9.2 9.6 10.1 L7.4 13.6 L6.4 10.7 C3.1 10.6 0.7 8.4 0.7 5.7 C0.7 2.9 3.3 0.7 6.6 0.7 Z" fill="#fdfdfd" stroke="#2a2a2a" stroke-width="1.35"/><circle cx="6.7" cy="3" r="1.4" fill="#1c1cb0"/><path d="M4.9 4.8 H7.9 V8 H8.9 V9.3 H4.6 V8 H5.7 V6 H4.9 Z" fill="#1c1cb0"/></svg>
<span class="t" style="top:104.13px;font-size:10.4px;left:18.6px;letter-spacing:0.060px;">09/09/07 9:35:22 AM - (4) Searching in \\XP\ADMIN$\WinSxS\x86_Microsoft.Windows.Common-Controls_6595b64144ccf1df</span>
<div style="left:607px;top:101.8px;width:154.5px;height:16px;background:#fff;"></div>
<span class="t" style="top:104.13px;font-size:10.4px;left:608px;letter-spacing:0.381px;">180_x-ww_522f9f82</span>
<svg style="left:2.2px;top:118.7px" width="13.4" height="14.4" viewBox="0 0 13.4 14.4"><path d="M6.6 0.7 C10 0.7 12.6 2.9 12.6 5.7 C12.6 7.6 11.4 9.2 9.6 10.1 L7.4 13.6 L6.4 10.7 C3.1 10.6 0.7 8.4 0.7 5.7 C0.7 2.9 3.3 0.7 6.6 0.7 Z" fill="#fdfdfd" stroke="#2a2a2a" stroke-width="1.35"/><circle cx="6.7" cy="3" r="1.4" fill="#1c1cb0"/><path d="M4.9 4.8 H7.9 V8 H8.9 V9.3 H4.6 V8 H5.7 V6 H4.9 Z" fill="#1c1cb0"/></svg>
<span class="t" style="top:120.63px;font-size:10.4px;left:18.6px;letter-spacing:0.060px;">09/09/07 9:35:22 AM - (4) Searching in \\XP\ADMIN$\WinSxS\x86_Microsoft.Windows.Common-Controls_6595b64144ccf1df</span>
<div style="left:607.4px;top:118.3px;width:154.1px;height:16px;background:#fff;"></div>
<span class="t" style="top:120.63px;font-size:10.4px;left:608.4px;letter-spacing:0.207px;">ww_8d353f13</span>
<svg style="left:2.2px;top:135.2px" width="13.4" height="14.4" viewBox="0 0 13.4 14.4"><path d="M6.6 0.7 C10 0.7 12.6 2.9 12.6 5.7 C12.6 7.6 11.4 9.2 9.6 10.1 L7.4 13.6 L6.4 10.7 C3.1 10.6 0.7 8.4 0.7 5.7 C0.7 2.9 3.3 0.7 6.6 0.7 Z" fill="#fdfdfd" stroke="#2a2a2a" stroke-width="1.35"/><circle cx="6.7" cy="3" r="1.4" fill="#1c1cb0"/><path d="M4.9 4.8 H7.9 V8 H8.9 V9.3 H4.6 V8 H5.7 V6 H4.9 Z" fill="#1c1cb0"/></svg>
<span class="t" style="top:137.13px;font-size:10.4px;left:18.6px;letter-spacing:0.060px;">09/09/07 9:35:22 AM - (4) Searching in \\XP\ADMIN$\WinSxS\x86_Microsoft.Windows.Common-Controls_6595b64144ccf1df</span>
<div style="left:608px;top:134.8px;width:153.5px;height:16px;background:#fff;"></div>
<span class="t" style="top:137.13px;font-size:10.4px;left:609px;letter-spacing:0.088px;">7.0.2600.2180_x-ww_b2505...</span>
<svg style="left:2.2px;top:151.7px" width="13.4" height="14.4" viewBox="0 0 13.4 14.4"><path d="M6.6 0.7 C10 0.7 12.6 2.9 12.6 5.7 C12.6 7.6 11.4 9.2 9.6 10.1 L7.4 13.6 L6.4 10.7 C3.1 10.6 0.7 8.4 0.7 5.7 C0.7 2.9 3.3 0.7 6.6 0.7 Z" fill="#fdfdfd" stroke="#2a2a2a" stroke-width="1.35"/><circle cx="6.7" cy="3" r="1.4" fill="#1c1cb0"/><path d="M4.9 4.8 H7.9 V8 H8.9 V9.3 H4.6 V8 H5.7 V6 H4.9 Z" fill="#1c1cb0"/></svg>
<span class="t" style="top:153.63px;font-size:10.4px;left:18.6px;letter-spacing:0.060px;">09/09/07 9:35:22 AM - (4) Searching in \\XP\ADMIN$\WinSxS\x86_Microsoft.Windows.Common-Controls_6595b64144ccf1df</span>
<div style="left:607px;top:151.3px;width:160px;height:16px;background:#fff;"></div>
<span class="t" style="top:153.63px;font-size:10.4px;left:609px;">7.0.0.0_x-ww_2726e76a</span>
<div style="left:0px;top:18.4px;width:755px;height:1px;background:#ecece8;"></div>
<div style="left:0px;top:34.9px;width:755px;height:1px;background:#ecece8;"></div>
<div style="left:0px;top:51.4px;width:755px;height:1px;background:#ecece8;"></div>
<div style="left:0px;top:67.9px;width:755px;height:1px;background:#ecece8;"></div>
<div style="left:0px;top:84.4px;width:755px;height:1px;background:#ecece8;"></div>
<div style="left:0px;top:100.9px;width:755px;height:1px;background:#ecece8;"></div>
<div style="left:0px;top:117.4px;width:755px;height:1px;background:#ecece8;"></div>
<div style="left:0px;top:133.9px;width:755px;height:1px;background:#ecece8;"></div>
<div style="left:0px;top:150.4px;width:755px;height:1px;background:#ecece8;"></div>
<div style="left:0px;top:166.9px;width:755px;height:1px;background:#ecece8;"></div>
<div style="left:754.6px;top:0px;width:1px;height:157px;background:#e7e7e3;"></div>
</div>
<div style="left:972.8px;top:588.5px;width:13.7px;height:157px;background:linear-gradient(90deg,#f4f3ee,#fcfcf9 45%,#fffffe);"></div>
<div style="left:973.4px;top:591.2px;width:12.6px;height:13px;background:linear-gradient(135deg,#d6e2fe,#bccffa 60%,#aec2f4);border:1px solid #e6eeff;border-radius:2.5px;box-shadow:0 0 0 .5px #b4c6ee;"><svg style="left:0;top:0" width="10.6" height="11" viewBox="0 0 13.6 13.6" preserveAspectRatio="none"><path d="M3.2 8.6 L6.8 5 L10.4 8.6" fill="none" stroke="#3e568c" stroke-width="2.1"/></svg></div>
<div style="left:973.4px;top:606.3px;width:12.6px;height:7px;background:linear-gradient(90deg,#cadafd,#c0d2fb 50%,#b4c8f6);border:1px solid #e6eeff;border-radius:2.5px;box-shadow:0 0 0 .5px #a8bcec;"></div>
<div style="left:973.4px;top:731.2px;width:12.6px;height:13.2px;background:linear-gradient(135deg,#d6e2fe,#bccffa 60%,#aec2f4);border:1px solid #e6eeff;border-radius:2.5px;box-shadow:0 0 0 .5px #b4c6ee;"><svg style="left:0;top:0" width="10.6" height="11.2" viewBox="0 0 13.6 13.6" preserveAspectRatio="none"><path d="M3.2 5.2 L6.8 8.8 L10.4 5.2" fill="none" stroke="#3e568c" stroke-width="2.1"/></svg></div>
<div style="left:459.8px;top:354.2px;width:360.8px;height:388.6px;background:rgba(0,0,0,.45);filter:blur(.5px);"></div>
<div style="left:457.2px;top:351.6px;width:360.8px;height:388.6px;background:#fff;border:1px solid #a8a696;"></div>
<span class="t" style="top:358.08px;font-size:10.5px;left:476.6px;letter-spacing:0.398px;font-weight:bold;">Play</span>
<span class="t" style="top:374.38px;font-size:10.5px;left:476.6px;letter-spacing:0.138px;">Queue-It-Up</span>
<span class="t" style="top:391.28px;font-size:10.5px;left:476.6px;letter-spacing:0.122px;">Add to Playlist...</span>
<span class="t" style="top:407.58px;font-size:10.5px;left:476.6px;letter-spacing:-0.077px;">Copy to CD or Device</span>
<span class="t" style="top:424.08px;font-size:10.5px;left:476.6px;letter-spacing:-0.086px;">Select Left Side to Compare</span>
<span class="t" style="top:440.38px;font-size:10.5px;left:476.6px;letter-spacing:0.026px;">Convert with Easy CD-DA Extractor</span>
<span class="t" style="top:456.78px;font-size:10.5px;left:476.6px;letter-spacing:-0.047px;">Burn to an Audio CD with Easy CD-DA Extractor</span>
<span class="t" style="top:473.38px;font-size:10.5px;left:476.6px;letter-spacing:0.220px;">Open With...</span>
<span class="t" style="top:489.58px;font-size:10.5px;left:476.6px;">UltraEdit-32</span>
<span class="t" style="top:515.28px;font-size:10.5px;left:476.6px;letter-spacing:0.104px;">Scan for viruses...</span>
<span class="t" style="top:540.58px;font-size:10.5px;left:476.6px;letter-spacing:0.184px;">Add to archive...</span>
<span class="t" style="top:556.88px;font-size:10.5px;left:476.6px;letter-spacing:0.035px;">Add to "02.Nocturne in B flat minor Opus 9 No.1.rar"</span>
<span class="t" style="top:573.18px;font-size:10.5px;left:476.6px;letter-spacing:-0.074px;">Compress and email...</span>
<span class="t" style="top:589.58px;font-size:10.5px;left:476.6px;letter-spacing:-0.028px;">Compress to "02.Nocturne in B flat minor Opus 9 No.1.rar" and email</span>
<span class="t" style="top:615.38px;font-size:10.5px;left:476.6px;letter-spacing:-0.078px;">Send To</span>
<span class="t" style="top:640.78px;font-size:10.5px;left:476.6px;letter-spacing:-0.115px;">Cut</span>
<span class="t" style="top:656.98px;font-size:10.5px;left:476.6px;letter-spacing:-0.129px;">Copy</span>
<span class="t" style="top:682.28px;font-size:10.5px;left:476.6px;letter-spacing:0.064px;">Create Shortcut</span>
<span class="t" style="top:698.68px;font-size:10.5px;left:476.6px;letter-spacing:0.023px;">Delete</span>
<span class="t" style="top:723.78px;font-size:10.5px;left:476.6px;letter-spacing:-0.036px;">Properties</span>
<div style="left:461px;top:506.65px;width:352.6px;height:1.3px;background:#a5a394;"></div>
<div style="left:461px;top:532.15px;width:352.6px;height:1.3px;background:#a5a394;"></div>
<div style="left:461px;top:606.75px;width:352.6px;height:1.3px;background:#a5a394;"></div>
<div style="left:461px;top:631.65px;width:352.6px;height:1.3px;background:#a5a394;"></div>
<div style="left:461px;top:673.65px;width:352.6px;height:1.3px;background:#a5a394;"></div>
<div style="left:461px;top:715.15px;width:352.6px;height:1.3px;background:#a5a394;"></div>
<svg style="left:806px;top:616.3px" width="4.6" height="8" viewBox="0 0 4.6 8"><path d="M0.2 0.2 L4.2 4 L0.2 7.8 Z" fill="#000"/></svg>
<svg style="left:461.6px;top:422.6px" width="14" height="11" viewBox="0 0 14 11"><path d="M6 3 C10 2.4 12.6 5 11.4 10" fill="none" stroke="#2c0808" stroke-width="3.2"/><path d="M0.2 3.8 L6.6 0 L6.6 7.4 Z" fill="#d81e1e"/><path d="M6 3.6 C7.6 3.2 9 3.4 9.8 4.4" fill="none" stroke="#c41a1a" stroke-width="2.8"/></svg>
<svg style="left:462.6px;top:514px" width="11" height="13" viewBox="0 0 11 13"><path d="M0.6 1.6 L2.6 0.4 L5.4 1.8 L8.2 0.4 L10.4 1.6 V7.4 C10 10 7.6 11.8 5.4 12.6 C3.2 11.8 1 10 0.6 7.4 Z" fill="#1a1aa0"/><path d="M3.2 3.4 L5.4 9 L7.6 3.4" fill="none" stroke="#fff" stroke-width="1.7"/></svg>
<svg style="left:462px;top:539.5px" width="13.4" height="13" viewBox="0 0 13.4 13"><path d="M0.6 3.4 L4 0.6 L13 1.6 L12.4 4.6 L3 5 Z" fill="#a82030" stroke="#3a0c12" stroke-width=".8"/><path d="M1 5.4 L3 5 L12.4 4.6 L12.8 6 L3.4 6.4 Z" fill="#e8e8e8"/><path d="M0.8 6.4 L3.4 6.4 L12.8 6 L12.6 8 L3 8.6 Z" fill="#4a2a6a" stroke="#20102c" stroke-width=".8"/><path d="M1 8.8 L3 8.6 L12.6 8 L12.8 9.4 L3.4 10 Z" fill="#e8e8e8"/><path d="M0.8 10 L3.4 10 L12.8 9.4 L12.6 11.8 L3 12.6 Z" fill="#1f6a4a" stroke="#0c2c1c" stroke-width=".8"/></svg>
<svg style="left:462px;top:555.8px" width="13.4" height="13" viewBox="0 0 13.4 13"><path d="M0.6 3.4 L4 0.6 L13 1.6 L12.4 4.6 L3 5 Z" fill="#a82030" stroke="#3a0c12" stroke-width=".8"/><path d="M1 5.4 L3 5 L12.4 4.6 L12.8 6 L3.4 6.4 Z" fill="#e8e8e8"/><path d="M0.8 6.4 L3.4 6.4 L12.8 6 L12.6 8 L3 8.6 Z" fill="#4a2a6a" stroke="#20102c" stroke-width=".8"/><path d="M1 8.8 L3 8.6 L12.6 8 L12.8 9.4 L3.4 10 Z" fill="#e8e8e8"/><path d="M0.8 10 L3.4 10 L12.8 9.4 L12.6 11.8 L3 12.6 Z" fill="#1f6a4a" stroke="#0c2c1c" stroke-width=".8"/></svg>
<svg style="left:462px;top:572.1px" width="13.4" height="13" viewBox="0 0 13.4 13"><path d="M0.6 3.4 L4 0.6 L13 1.6 L12.4 4.6 L3 5 Z" fill="#a82030" stroke="#3a0c12" stroke-width=".8"/><path d="M1 5.4 L3 5 L12.4 4.6 L12.8 6 L3.4 6.4 Z" fill="#e8e8e8"/><path d="M0.8 6.4 L3.4 6.4 L12.8 6 L12.6 8 L3 8.6 Z" fill="#4a2a6a" stroke="#20102c" stroke-width=".8"/><path d="M1 8.8 L3 8.6 L12.6 8 L12.8 9.4 L3.4 10 Z" fill="#e8e8e8"/><path d="M0.8 10 L3.4 10 L12.8 9.4 L12.6 11.8 L3 12.6 Z" fill="#1f6a4a" stroke="#0c2c1c" stroke-width=".8"/></svg>
<svg style="left:462px;top:588.5px" width="13.4" height="13" viewBox="0 0 13.4 13"><path d="M0.6 3.4 L4 0.6 L13 1.6 L12.4 4.6 L3 5 Z" fill="#a82030" stroke="#3a0c12" stroke-width=".8"/><path d="M1 5.4 L3 5 L12.4 4.6 L12.8 6 L3.4 6.4 Z" fill="#e8e8e8"/><path d="M0.8 6.4 L3.4 6.4 L12.8 6 L12.6 8 L3 8.6 Z" fill="#4a2a6a" stroke="#20102c" stroke-width=".8"/><path d="M1 8.8 L3 8.6 L12.6 8 L12.8 9.4 L3.4 10 Z" fill="#e8e8e8"/><path d="M0.8 10 L3.4 10 L12.8 9.4 L12.6 11.8 L3 12.6 Z" fill="#1f6a4a" stroke="#0c2c1c" stroke-width=".8"/></svg>
</div>
</body></html>
